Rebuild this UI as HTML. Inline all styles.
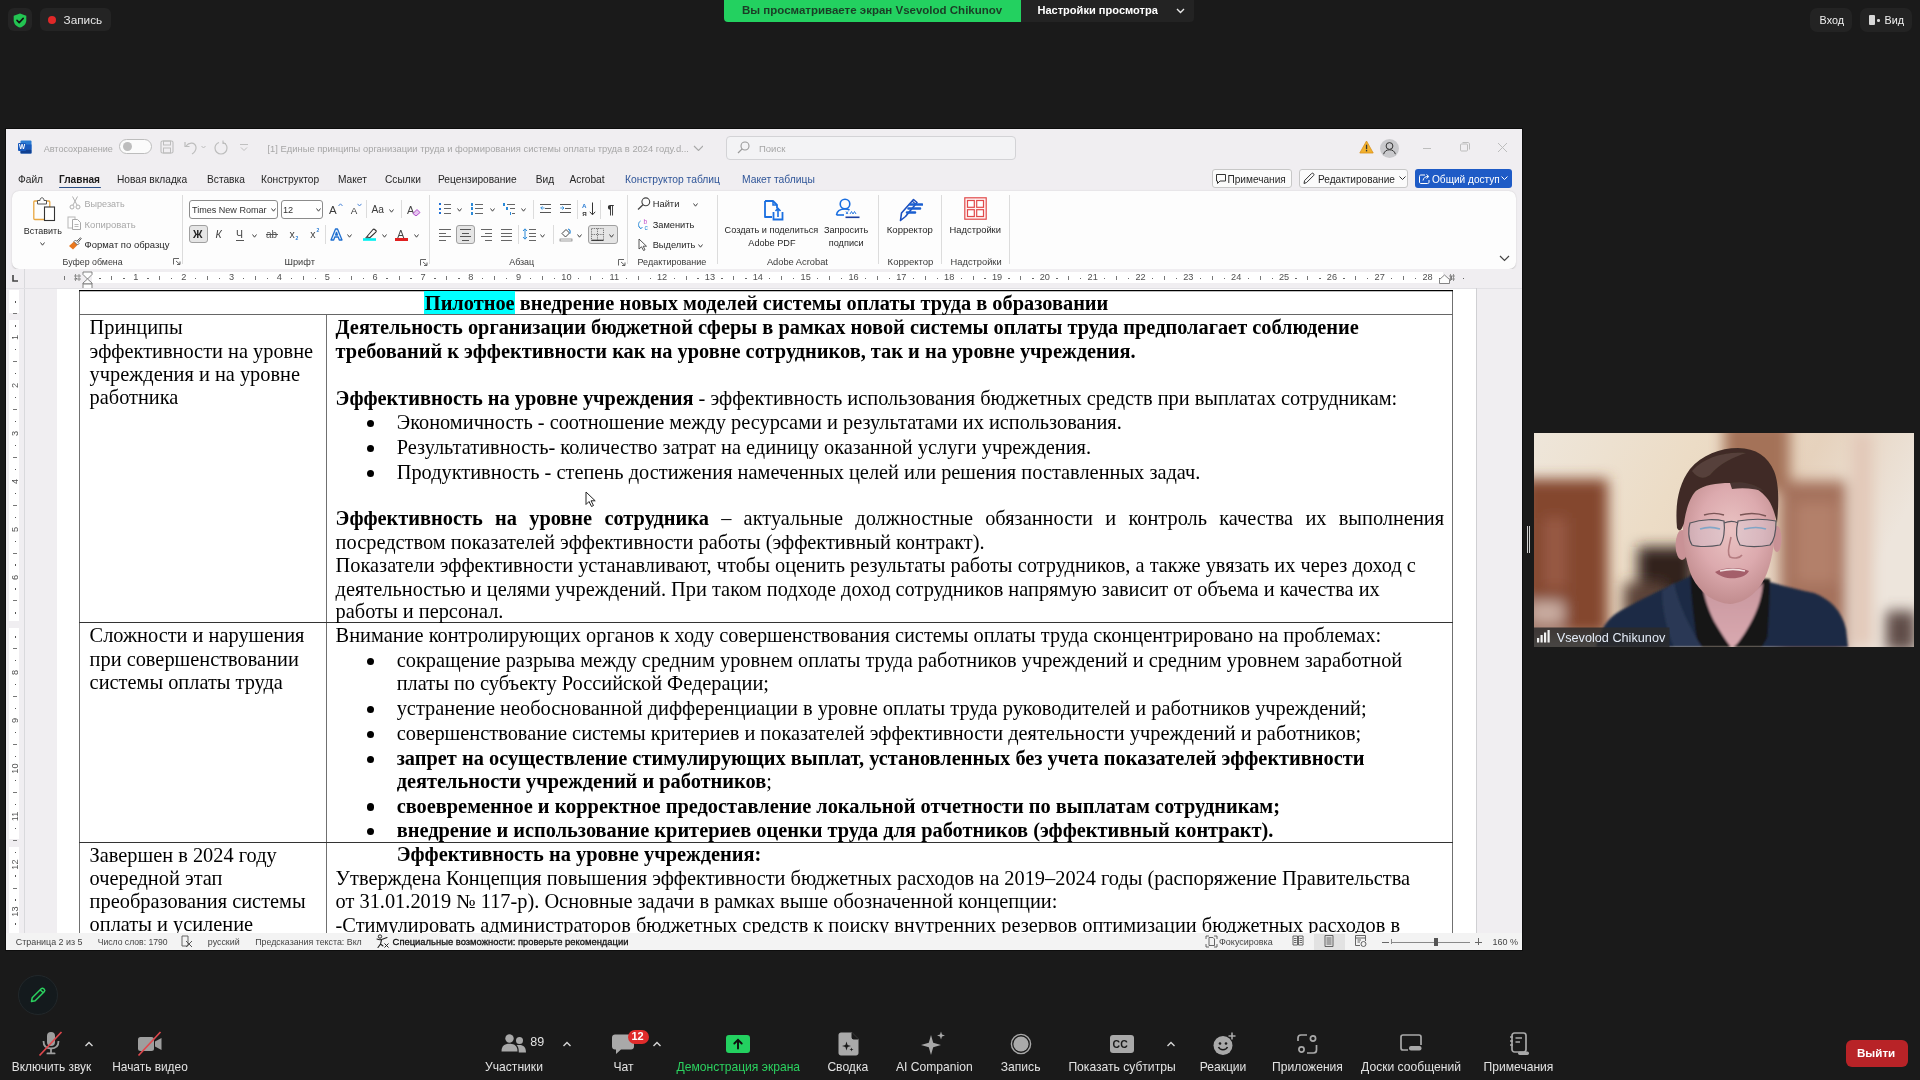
<!DOCTYPE html><html><head><meta charset="utf-8"><style>
*{margin:0;padding:0;box-sizing:border-box}
html,body{width:1920px;height:1080px;overflow:hidden;background:#1a1a1a}
body{position:relative;font-family:'Liberation Sans',sans-serif}
.t{position:absolute;white-space:nowrap}
.r{position:absolute;display:block}
</style></head><body><div id="root" style="position:absolute;left:0;top:0;width:1920px;height:1080px;overflow:hidden;will-change:transform"><div class="r" style="left:8px;top:8px;width:24px;height:23px;background:#242424;border-radius:6px"></div>
<svg class="r" style="left:13px;top:13px;" width="14" height="15" viewBox="0 0 14 15"><path d="M7 0.5 L13.3 2.8 V7.2 C13.3 10.9 10.6 13.4 7 14.6 C3.4 13.4 0.7 10.9 0.7 7.2 V2.8 Z" fill="#23c552"/><path d="M4 7.4 L6.2 9.6 L10.2 5.4" stroke="#111" stroke-width="1.6" fill="none" stroke-linecap="round" stroke-linejoin="round"/></svg>
<div class="r" style="left:40px;top:8px;width:71px;height:23px;background:#242424;border-radius:6px"></div>
<div class="r" style="left:48px;top:16px;width:8px;height:8px;background:#e02828;border-radius:50%"></div>
<div class="t" style="left:63.5px;top:15px;font-size:11.8px;line-height:11.8px;color:#e6e6e6;font-weight:400;font-family:'Liberation Sans';">Запись</div>
<div class="r" style="left:724px;top:0px;width:297px;height:22px;background:#23d160;border-radius:0 0 0 4px"></div>
<div class="t" style="left:742px;top:5px;font-size:11.5px;line-height:11.5px;color:#1b3d26;font-weight:700;font-family:'Liberation Sans';">Вы просматриваете экран Vsevolod Chikunov</div>
<div class="r" style="left:1021px;top:0px;width:173px;height:22px;background:#232323;border-radius:0 0 4px 0"></div>
<div class="t" style="left:1037.4px;top:5px;font-size:11.07px;line-height:11.07px;color:#ffffff;font-weight:700;font-family:'Liberation Sans';">Настройки просмотра</div>
<svg class="r" style="left:1176px;top:8px;" width="9" height="6" viewBox="0 0 9 6"><path d="M1 1 L4.5 4.5 L8 1" stroke="#e8e8e8" stroke-width="1.4" fill="none"/></svg>
<div class="r" style="left:1810px;top:8px;width:42px;height:24px;background:#232323;border-radius:7px"></div>
<div class="t" style="left:1819.6px;top:15px;font-size:10.8px;line-height:10.8px;color:#f0f0f0;font-weight:400;font-family:'Liberation Sans';">Вход</div>
<div class="r" style="left:1860px;top:8px;width:52px;height:24px;background:#232323;border-radius:7px"></div>
<div class="r" style="left:1869px;top:15px;width:6px;height:10px;background:#d8d8d8;border-radius:1px"></div>
<div class="r" style="left:1877px;top:19px;width:2.5px;height:2.5px;background:#d8d8d8;border-radius:50%"></div>
<div class="t" style="left:1884.6px;top:15px;font-size:10.8px;line-height:10.8px;color:#f0f0f0;font-weight:400;font-family:'Liberation Sans';">Вид</div>
<div class="r" style="left:18px;top:975px;width:40px;height:40px;background:#141a1d;border-radius:50%;border:1px solid #22282b"></div>
<svg class="r" style="left:29px;top:986px;" width="18" height="18" viewBox="0 0 18 18"><path d="M2.5 15.5 L3.2 11.8 L12.2 2.8 C12.9 2.1 14.0 2.1 14.7 2.8 L15.2 3.3 C15.9 4.0 15.9 5.1 15.2 5.8 L6.2 14.8 Z M11.2 3.8 L14.2 6.8" stroke="#2bd15f" stroke-width="1.5" fill="none" stroke-linejoin="round"/></svg>
<svg class="r" style="left:38px;top:1031px;" width="26" height="26" viewBox="0 0 26 26"><rect x="9" y="1" width="8" height="14" rx="4" fill="#9e9e9e"/><path d="M5.5 10 C5.5 15 8.5 17.5 13 17.5 C17.5 17.5 20.5 15 20.5 10" stroke="#9e9e9e" stroke-width="1.8" fill="none"/><rect x="12.1" y="17.5" width="1.8" height="4.5" fill="#9e9e9e"/><rect x="8.5" y="21.5" width="9" height="1.8" rx="0.9" fill="#9e9e9e"/><path d="M1.5 24.5 L23.5 1" stroke="#e0484d" stroke-width="1.7"/></svg>
<div class="t" style="left:-148.5px;width:400px;text-align:center;top:1059.5px;font-size:11.9px;line-height:14px;color:#e3e3e3">Включить звук</div>
<svg class="r" style="left:84px;top:1041px;" width="10" height="6" viewBox="0 0 10 6"><path d="M1.5 5 L5 1.5 L8.5 5" stroke="#d6d6d6" stroke-width="1.4" fill="none"/></svg>
<svg class="r" style="left:137px;top:1031px;" width="26" height="26" viewBox="0 0 26 26"><rect x="1" y="6" width="16" height="14" rx="2.5" fill="#9e9e9e"/><path d="M18 10.5 L24.5 7 V19 L18 15.5 Z" fill="#9e9e9e"/><path d="M1.5 24.5 L23.5 1" stroke="#e0484d" stroke-width="1.7"/></svg>
<div class="t" style="left:-50px;width:400px;text-align:center;top:1059.5px;font-size:11.9px;line-height:14px;color:#e3e3e3">Начать видео</div>
<svg class="r" style="left:501px;top:1034px;" width="26" height="19" viewBox="0 0 26 19"><circle cx="8.5" cy="4.5" r="4.2" fill="#a9a9a9"/><path d="M0.5 17.5 C0.5 12 3.5 9.8 8.5 9.8 C13.5 9.8 16.5 12 16.5 17.5 Z" fill="#a9a9a9"/><circle cx="18.5" cy="6.5" r="3.5" fill="#a9a9a9"/><path d="M17.8 18.5 C17.8 14 17 12.5 15.5 11.3 C16.5 11 17.5 10.9 18.5 10.9 C22.5 10.9 25 12.8 25 18.5 Z" fill="#a9a9a9"/></svg>
<div class="t" style="left:530.3px;top:1036px;font-size:12.5px;line-height:12.5px;color:#e3e3e3;font-weight:400;font-family:'Liberation Sans';">89</div>
<svg class="r" style="left:562px;top:1041px;" width="10" height="6" viewBox="0 0 10 6"><path d="M1.5 5 L5 1.5 L8.5 5" stroke="#d6d6d6" stroke-width="1.4" fill="none"/></svg>
<div class="t" style="left:314px;width:400px;text-align:center;top:1059.5px;font-size:12.1px;line-height:14px;color:#e3e3e3">Участники</div>
<svg class="r" style="left:612px;top:1034px;" width="24" height="21" viewBox="0 0 24 21"><path d="M3 0.5 H19 C20.7 0.5 22 1.8 22 3.5 V12.5 C22 14.2 20.7 15.5 19 15.5 H9 L4 20 V15.5 H3 C1.3 15.5 0 14.2 0 12.5 V3.5 C0 1.8 1.3 0.5 3 0.5 Z" fill="#a9a9a9"/></svg>
<div class="r" style="left:627.5px;top:1029.5px;width:21px;height:14px;background:#e02b2b;border-radius:7px"></div>
<div class="t" style="left:631.5px;top:1031px;font-size:11px;line-height:11px;color:#ffffff;font-weight:700;font-family:'Liberation Sans';">12</div>
<svg class="r" style="left:652px;top:1041px;" width="10" height="6" viewBox="0 0 10 6"><path d="M1.5 5 L5 1.5 L8.5 5" stroke="#d6d6d6" stroke-width="1.4" fill="none"/></svg>
<div class="t" style="left:423.5px;width:400px;text-align:center;top:1059.5px;font-size:12.1px;line-height:14px;color:#e3e3e3">Чат</div>
<div class="r" style="left:725.7px;top:1034.7px;width:24.5px;height:18.5px;background:#23d160;border-radius:3px"></div>
<svg class="r" style="left:732px;top:1038px;" width="12" height="12" viewBox="0 0 12 12"><path d="M6 10.5 V2 M2.3 5.5 L6 1.8 L9.7 5.5" stroke="#0f0f0f" stroke-width="1.9" fill="none" stroke-linecap="round"/></svg>
<div class="t" style="left:538.3px;width:400px;text-align:center;top:1059.5px;font-size:12.1px;line-height:14px;color:#2bd15f">Демонстрация экрана</div>
<svg class="r" style="left:838px;top:1032px;" width="21" height="24" viewBox="0 0 21 24"><path d="M3 0.5 H14 L20.5 7 V21 C20.5 22.4 19.4 23.5 18 23.5 H3 C1.6 23.5 0.5 22.4 0.5 21 V3 C0.5 1.6 1.6 0.5 3 0.5 Z" fill="#a9a9a9"/><path d="M14 0.5 V7 H20.5" fill="#1a1a1a"/><path d="M14 0.8 V5.5 C14 6.3 14.7 7 15.5 7 H20.2" stroke="#1a1a1a" stroke-width="1" fill="none"/><path d="M8.5 9.5 L9.6 13 L13 14 L9.6 15.1 L8.5 18.5 L7.4 15.1 L4 14 L7.4 13 Z" fill="#1a1a1a"/><path d="M13.5 15.5 L14 17 L15.5 17.5 L14 18 L13.5 19.5 L13 18 L11.5 17.5 L13 17 Z" fill="#1a1a1a"/></svg>
<div class="t" style="left:647.8px;width:400px;text-align:center;top:1059.5px;font-size:12.1px;line-height:14px;color:#e3e3e3">Сводка</div>
<svg class="r" style="left:920px;top:1031px;" width="27" height="25" viewBox="0 0 27 25"><path d="M11 4 L13.2 11.8 L21 14 L13.2 16.2 L11 24 L8.8 16.2 L1 14 L8.8 11.8 Z" fill="#a9a9a9"/><path d="M21 0.5 L22 3.5 L25 4.5 L22 5.5 L21 8.5 L20 5.5 L17 4.5 L20 3.5 Z" fill="#a9a9a9"/></svg>
<div class="t" style="left:734.3px;width:400px;text-align:center;top:1059.5px;font-size:12.1px;line-height:14px;color:#e3e3e3">AI Companion</div>
<svg class="r" style="left:1010px;top:1033px;" width="22" height="22" viewBox="0 0 22 22"><circle cx="11" cy="11" r="9.6" stroke="#a9a9a9" stroke-width="1.4" fill="none"/><circle cx="11" cy="11" r="7.6" fill="#a9a9a9"/></svg>
<div class="t" style="left:820.6px;width:400px;text-align:center;top:1059.5px;font-size:12.1px;line-height:14px;color:#e3e3e3">Запись</div>
<div class="r" style="left:1110.3px;top:1034.8px;width:23.5px;height:18px;background:#a9a9a9;border-radius:3px"></div>
<div class="t" style="left:1112.6px;top:1039px;font-size:10.5px;line-height:10.5px;color:#1a1a1a;font-weight:700;font-family:'Liberation Sans';">CC</div>
<svg class="r" style="left:1166px;top:1041px;" width="10" height="6" viewBox="0 0 10 6"><path d="M1.5 5 L5 1.5 L8.5 5" stroke="#d6d6d6" stroke-width="1.4" fill="none"/></svg>
<div class="t" style="left:922px;width:400px;text-align:center;top:1059.5px;font-size:12.1px;line-height:14px;color:#e3e3e3">Показать субтитры</div>
<svg class="r" style="left:1213px;top:1032px;" width="24" height="24" viewBox="0 0 24 24"><circle cx="10" cy="13.5" r="9.5" fill="#a9a9a9"/><circle cx="7" cy="11.5" r="1.3" fill="#1a1a1a"/><circle cx="13" cy="11.5" r="1.3" fill="#1a1a1a"/><path d="M5.5 15 C7 18.5 13 18.5 14.5 15" stroke="#1a1a1a" stroke-width="1.5" fill="none"/><path d="M19 0.5 V7.5 M15.5 4 H22.5" stroke="#a9a9a9" stroke-width="1.6"/></svg>
<div class="t" style="left:1023px;width:400px;text-align:center;top:1059.5px;font-size:12.1px;line-height:14px;color:#e3e3e3">Реакции</div>
<svg class="r" style="left:1297px;top:1034px;" width="21" height="20" viewBox="0 0 21 20"><path d="M1 7 V4 C1 2.3 2.3 1 4 1 H10" stroke="#a9a9a9" stroke-width="1.7" fill="none"/><path d="M19.5 11 V16 C19.5 17.7 18.2 19 16.5 19 H10" stroke="#a9a9a9" stroke-width="1.7" fill="none"/><circle cx="16" cy="4.5" r="2.6" stroke="#a9a9a9" stroke-width="1.7" fill="none"/><circle cx="4.5" cy="15.5" r="2.6" stroke="#a9a9a9" stroke-width="1.7" fill="none"/></svg>
<div class="t" style="left:1107.5px;width:400px;text-align:center;top:1059.5px;font-size:12.1px;line-height:14px;color:#e3e3e3">Приложения</div>
<svg class="r" style="left:1400px;top:1034px;" width="22" height="18" viewBox="0 0 22 18"><path d="M8 16 H3 C1.8 16 1 15.2 1 14 V3 C1 1.8 1.8 1 3 1 H19 C20.2 1 21 1.8 21 3 V11" stroke="#a9a9a9" stroke-width="1.7" fill="none"/><rect x="9" y="12" width="12.5" height="4.5" rx="2" fill="#a9a9a9"/></svg>
<div class="t" style="left:1211px;width:400px;text-align:center;top:1059.5px;font-size:12.1px;line-height:14px;color:#e3e3e3">Доски сообщений</div>
<svg class="r" style="left:1509px;top:1032px;" width="21" height="24" viewBox="0 0 21 24"><rect x="3" y="1" width="14" height="19" rx="2.5" stroke="#a9a9a9" stroke-width="1.7" fill="none"/><path d="M1 5 H4 M1 9 H4 M1 13 H4 M6.5 6 H13 M6.5 10 H11" stroke="#a9a9a9" stroke-width="1.5"/><rect x="9" y="19.5" width="11" height="3.5" rx="1.7" fill="#a9a9a9"/></svg>
<div class="t" style="left:1318.5px;width:400px;text-align:center;top:1059.5px;font-size:12.1px;line-height:14px;color:#e3e3e3">Примечания</div>
<div class="r" style="left:1846px;top:1040px;width:62px;height:27px;background:#b82327;border-radius:6px"></div>
<div class="t" style="left:1857px;top:1047px;font-size:11.6px;line-height:11.6px;color:#ffffff;font-weight:700;font-family:'Liberation Sans';">Выйти</div>
<div class="r" style="left:5px;top:128px;width:1518px;height:823px;background:#0d0d0d"></div>
<div class="r" style="left:6px;top:129px;width:1516px;height:821px;background:#f0eef1"></div>
<svg class="r" style="left:18px;top:140px;" width="14" height="14" viewBox="0 0 14 14"><rect x="2.5" y="0.5" width="11" height="13" rx="1" fill="#2b7cd3"/><rect x="2.5" y="4.5" width="11" height="5" fill="#185abd"/><rect x="2.5" y="9.5" width="11" height="4" rx="0.5" fill="#103f91"/><rect x="0" y="3" width="8" height="8" rx="1" fill="#185abd"/><text x="4" y="9.4" font-size="6.5" font-family="Liberation Sans" font-weight="700" fill="#fff" text-anchor="middle">W</text></svg>
<div class="t" style="left:43.7px;top:145px;font-size:9.08px;line-height:9.08px;color:#a6a6a6;font-weight:400;font-family:'Liberation Sans';">Автосохранение</div>
<div class="r" style="left:119px;top:139px;width:33px;height:15px;background:#fbfbfb;border:1px solid #bdbdbd;border-radius:8px"></div>
<div class="r" style="left:122.5px;top:142px;width:9px;height:9px;background:#bdbdbd;border-radius:50%"></div>
<svg class="r" style="left:160px;top:140px;" width="15" height="15" viewBox="0 0 15 15"><rect x="1" y="1" width="12" height="12" rx="1.5" stroke="#bdbdbd" stroke-width="1.1" fill="none"/><rect x="3.5" y="1" width="7" height="4" stroke="#bdbdbd" stroke-width="1" fill="none"/><rect x="3.5" y="8" width="7" height="5" stroke="#bdbdbd" stroke-width="1" fill="none"/></svg>
<svg class="r" style="left:183px;top:140px;" width="26" height="15" viewBox="0 0 26 15"><path d="M3 6 C6 2 12 2 13 7 C13.5 10 11 13 9 14" stroke="#bdbdbd" stroke-width="1.2" fill="none"/><path d="M2 2 V6.5 H6.5" stroke="#bdbdbd" stroke-width="1.2" fill="none"/><path d="M18.5 6 L20.5 8 L22.5 6" stroke="#bdbdbd" stroke-width="1" fill="none"/></svg>
<svg class="r" style="left:213px;top:140px;" width="16" height="15" viewBox="0 0 16 15"><path d="M10 2.5 C12.5 3.5 14 5.5 14 8 C14 11.3 11.3 14 8 14 C4.7 14 2 11.3 2 8 C2 5.5 3.5 3.5 6 2.5" stroke="#bdbdbd" stroke-width="1.2" fill="none"/><path d="M10 0.5 V3.5 H13" stroke="#bdbdbd" stroke-width="1.1" fill="none"/></svg>
<svg class="r" style="left:239px;top:143px;" width="10" height="9" viewBox="0 0 10 9"><path d="M1 1.5 H9 M2 4.5 L5 7.5 L8 4.5" stroke="#c0c0c0" stroke-width="1" fill="none"/></svg>
<div class="t" style="left:267.5px;top:145px;font-size:9.38px;line-height:9.38px;color:#a6a6a6;font-weight:400;font-family:'Liberation Sans';">[1] Единые принципы организации труда и формирования системы оплаты труда в 2024 году.d...</div>
<svg class="r" style="left:692.5px;top:145px;" width="10" height="6" viewBox="0 0 10 6"><path d="M1 1 L5.5 5.5 L10 1" stroke="#a8a8a8" stroke-width="1.1" fill="none"/></svg>
<div class="r" style="left:726px;top:135.5px;width:290px;height:24.5px;background:#f3f3f5;border:1px solid #d3d3d6;border-radius:4px"></div>
<svg class="r" style="left:737px;top:141px;" width="13" height="13" viewBox="0 0 13 13"><circle cx="8" cy="5" r="4" stroke="#9a9a9a" stroke-width="1.1" fill="none"/><path d="M5.2 7.8 L1 12" stroke="#9a9a9a" stroke-width="1.2"/></svg>
<div class="t" style="left:759px;top:144px;font-size:9.5px;line-height:9.5px;color:#a6a6a6;font-weight:400;font-family:'Liberation Sans';">Поиск</div>
<svg class="r" style="left:1359px;top:140px;" width="15" height="14" viewBox="0 0 15 14"><path d="M7.5 1 L14.2 13 H0.8 Z" fill="#f2b12e" stroke="#d8901a" stroke-width="0.8"/><rect x="6.9" y="4.7" width="1.3" height="4.5" fill="#333"/><rect x="6.9" y="10" width="1.3" height="1.4" fill="#333"/></svg>
<div class="r" style="left:1380px;top:138.5px;width:19px;height:19px;background:#c9c9cc;border-radius:50%"></div>
<svg class="r" style="left:1380px;top:138.5px;" width="19" height="19" viewBox="0 0 19 19"><circle cx="9.5" cy="7" r="3.4" stroke="#333" stroke-width="1" fill="none"/><path d="M3.6 15.2 C4.5 12 6.6 10.8 9.5 10.8 C12.4 10.8 14.5 12 15.4 15.2" stroke="#333" stroke-width="1" fill="none"/></svg>
<div class="r" style="left:1423px;top:147.5px;width:8px;height:1px;background:#bdbdbd"></div>
<svg class="r" style="left:1460px;top:142px;" width="10" height="10" viewBox="0 0 10 10"><rect x="0.5" y="2" width="7" height="7" rx="1" stroke="#bdbdbd" stroke-width="1" fill="none"/><path d="M2.5 0.5 H8 C8.8 0.5 9.5 1.2 9.5 2 V7.5" stroke="#bdbdbd" stroke-width="1" fill="none"/></svg>
<svg class="r" style="left:1497px;top:142px;" width="11" height="11" viewBox="0 0 11 11"><path d="M1 1 L10 10 M10 1 L1 10" stroke="#bdbdbd" stroke-width="1"/></svg>
<div class="t" style="left:18px;top:175px;font-size:10.2px;line-height:10.2px;color:#262626;font-weight:400;font-family:'Liberation Sans';">Файл</div>
<div class="t" style="left:117px;top:175px;font-size:10.2px;line-height:10.2px;color:#262626;font-weight:400;font-family:'Liberation Sans';">Новая вкладка</div>
<div class="t" style="left:207px;top:175px;font-size:10.2px;line-height:10.2px;color:#262626;font-weight:400;font-family:'Liberation Sans';">Вставка</div>
<div class="t" style="left:261px;top:175px;font-size:10.2px;line-height:10.2px;color:#262626;font-weight:400;font-family:'Liberation Sans';">Конструктор</div>
<div class="t" style="left:338px;top:175px;font-size:10.2px;line-height:10.2px;color:#262626;font-weight:400;font-family:'Liberation Sans';">Макет</div>
<div class="t" style="left:385px;top:175px;font-size:10.2px;line-height:10.2px;color:#262626;font-weight:400;font-family:'Liberation Sans';">Ссылки</div>
<div class="t" style="left:438px;top:175px;font-size:10.2px;line-height:10.2px;color:#262626;font-weight:400;font-family:'Liberation Sans';">Рецензирование</div>
<div class="t" style="left:535.7px;top:175px;font-size:10.2px;line-height:10.2px;color:#262626;font-weight:400;font-family:'Liberation Sans';">Вид</div>
<div class="t" style="left:569.5px;top:175px;font-size:10.2px;line-height:10.2px;color:#262626;font-weight:400;font-family:'Liberation Sans';">Acrobat</div>
<div class="t" style="left:59px;top:175px;font-size:10.08px;line-height:10.08px;color:#1a1a1a;font-weight:700;font-family:'Liberation Sans';">Главная</div>
<div class="r" style="left:59px;top:186.7px;width:41.5px;height:1.6px;background:#2b5088;border-radius:1px"></div>
<div class="t" style="left:625px;top:175px;font-size:10.3px;line-height:10.3px;color:#2f5598;font-weight:400;font-family:'Liberation Sans';">Конструктор таблиц</div>
<div class="t" style="left:742px;top:175px;font-size:10.3px;line-height:10.3px;color:#2f5598;font-weight:400;font-family:'Liberation Sans';">Макет таблицы</div>
<div class="r" style="left:1211.5px;top:169px;width:80px;height:19px;background:#fbfbfb;border:1px solid #c7c7c7;border-radius:3px"></div>
<svg class="r" style="left:1215px;top:173px;" width="12" height="12" viewBox="0 0 12 12"><path d="M1.5 1.5 H10.5 V8 H5 L2.5 10.5 V8 H1.5 Z" stroke="#333" stroke-width="1" fill="none"/></svg>
<div class="t" style="left:1227.5px;top:175px;font-size:10.1px;line-height:10.1px;color:#262626;font-weight:400;font-family:'Liberation Sans';">Примечания</div>
<div class="r" style="left:1298.5px;top:169px;width:109px;height:19px;background:#fbfbfb;border:1px solid #c7c7c7;border-radius:3px"></div>
<svg class="r" style="left:1302px;top:171px;" width="13" height="14" viewBox="0 0 13 14"><path d="M2 12.5 L2.6 9.5 L9.5 2.6 C10.1 2 10.9 2 11.5 2.6 C12.1 3.2 12.1 4 11.5 4.6 L4.6 11.5 Z" stroke="#333" stroke-width="1" fill="none"/></svg>
<div class="t" style="left:1318px;top:175px;font-size:10.1px;line-height:10.1px;color:#262626;font-weight:400;font-family:'Liberation Sans';">Редактирование</div>
<svg class="r" style="left:1399px;top:176px;" width="7" height="5" viewBox="0 0 7 5"><path d="M0.5 0.5 L3.5 3.5 L6.5 0.5" stroke="#333" stroke-width="1" fill="none"/></svg>
<div class="r" style="left:1414.5px;top:169px;width:97.5px;height:19px;background:#1e5bc6;border-radius:3px"></div>
<svg class="r" style="left:1418px;top:172px;" width="13" height="13" viewBox="0 0 13 13"><path d="M7 3 H3 C2 3 1.5 3.5 1.5 4.5 V10 C1.5 11 2 11.5 3 11.5 H9.5 C10.5 11.5 11 11 11 10 V8" stroke="#fff" stroke-width="1" fill="none"/><path d="M5 8.5 C5.5 6 7 4.5 10 4.5 M8.5 2.5 L10.8 4.5 L8.5 6.5" stroke="#fff" stroke-width="1" fill="none"/></svg>
<div class="t" style="left:1432px;top:175px;font-size:10.1px;line-height:10.1px;color:#ffffff;font-weight:400;font-family:'Liberation Sans';">Общий доступ</div>
<svg class="r" style="left:1501px;top:176px;" width="7" height="5" viewBox="0 0 7 5"><path d="M0.5 0.5 L3.5 3.5 L6.5 0.5" stroke="#fff" stroke-width="1" fill="none"/></svg>
<div class="r" style="left:12px;top:190.5px;width:1504px;height:78.5px;background:#fdfdfd;border-radius:7px;box-shadow:0 0.5px 1.5px rgba(0,0,0,0.18)"></div>
<svg class="r" style="left:32px;top:197px;" width="24" height="25" viewBox="0 0 24 25"><rect x="1.8" y="4" width="16" height="18.5" rx="1" stroke="#e8a640" stroke-width="1.3" fill="#fdfdfd"/><path d="M5.5 7 V3.5 H8 C8 1.5 9 0.8 10 0.8 C11 0.8 12 1.5 12 3.5 H14.5 V7 Z" stroke="#555" stroke-width="1" fill="#fdfdfd"/><rect x="12.5" y="10" width="10" height="13.5" stroke="#333" stroke-width="1.1" fill="#fff"/></svg>
<div class="t" style="left:23.7px;top:227px;font-size:9.0px;line-height:9.0px;color:#262626;font-weight:400;font-family:'Liberation Sans';">Вставить</div>
<svg class="r" style="left:39.5px;top:242px;" width="5" height="4" viewBox="0 0 5 4"><path d="M0.5 0.5 L2.5 3.2 L4.5 0.5" stroke="#444" stroke-width="1" fill="none"/></svg>
<svg class="r" style="left:69px;top:196px;" width="12" height="14" viewBox="0 0 12 14"><path d="M3.5 0.5 L8 9 M8.5 0.5 L4 9" stroke="#b0b0b0" stroke-width="1" fill="none"/><circle cx="3" cy="11" r="2" stroke="#b0b0b0" stroke-width="1" fill="none"/><circle cx="9" cy="11" r="2" stroke="#b0b0b0" stroke-width="1" fill="none"/></svg>
<div class="t" style="left:84.6px;top:200px;font-size:9.0px;line-height:9.0px;color:#a8a8a8;font-weight:400;font-family:'Liberation Sans';">Вырезать</div>
<svg class="r" style="left:67px;top:216px;" width="15" height="14" viewBox="0 0 15 14"><rect x="1" y="1" width="7" height="11" stroke="#b8b8b8" stroke-width="1" fill="none"/><path d="M5.5 3.5 H10.5 L13.5 6.5 V13.5 H5.5 Z" stroke="#a8a8a8" stroke-width="1" fill="#fdfdfd"/><path d="M7.5 8.5 H11.5 M7.5 10.5 H11.5" stroke="#a8a8a8" stroke-width="0.8"/></svg>
<div class="t" style="left:84.6px;top:220px;font-size:9.47px;line-height:9.47px;color:#a8a8a8;font-weight:400;font-family:'Liberation Sans';">Копировать</div>
<svg class="r" style="left:68px;top:237px;" width="14" height="13" viewBox="0 0 14 13"><path d="M1 9 L6 4.5 L9.5 8 L5 12.5 Z" fill="#e8771e"/><path d="M6 4.5 L9.5 8 L11 6.5 L7.5 3 Z" fill="#fff" stroke="#444" stroke-width="0.8"/><path d="M9 4 L12.5 0.8 L13.2 1.5 L10.2 5.2" stroke="#444" stroke-width="0.9" fill="#fff"/></svg>
<div class="t" style="left:84.6px;top:240px;font-size:9.48px;line-height:9.48px;color:#262626;font-weight:400;font-family:'Liberation Sans';">Формат по образцу</div>
<div class="t" style="left:62.6px;top:258px;font-size:8.83px;line-height:8.83px;color:#3a3a3a;font-weight:400;font-family:'Liberation Sans';">Буфер обмена</div>
<svg class="r" style="left:172.5px;top:258px;" width="8" height="7" viewBox="0 0 8 7"><path d="M0.5 6.5 V0.5 H6" stroke="#555" stroke-width="0.9" fill="none"/><path d="M3 3 L7 6.5 M7 3.5 V6.5 H4" stroke="#555" stroke-width="0.9" fill="none"/></svg>
<div class="r" style="left:182px;top:195px;width:1px;height:69px;background:#dcdcdc"></div>
<div class="r" style="left:189px;top:200px;width:89px;height:18.5px;background:#fff;border:1px solid #8c8c8c;border-radius:3px"></div>
<div class="t" style="left:192px;top:206px;font-size:9.06px;line-height:9.06px;color:#333;font-weight:400;font-family:'Liberation Sans';">Times New Romar</div>
<svg class="r" style="left:271px;top:208px;" width="5" height="4" viewBox="0 0 5 4"><path d="M0.5 0.5 L2.5 3.2 L4.5 0.5" stroke="#444" stroke-width="1" fill="none"/></svg>
<div class="r" style="left:280.5px;top:200px;width:42.5px;height:18.5px;background:#fff;border:1px solid #8c8c8c;border-radius:3px"></div>
<div class="t" style="left:283px;top:206px;font-size:9.2px;line-height:9.2px;color:#333;font-weight:400;font-family:'Liberation Sans';">12</div>
<svg class="r" style="left:316px;top:208px;" width="5" height="4" viewBox="0 0 5 4"><path d="M0.5 0.5 L2.5 3.2 L4.5 0.5" stroke="#444" stroke-width="1" fill="none"/></svg>
<div class="t" style="left:329px;top:205px;font-size:11.5px;line-height:11.5px;color:#3a3a3a;font-weight:400;font-family:'Liberation Sans';">A</div>
<svg class="r" style="left:337.5px;top:203px;" width="5" height="4" viewBox="0 0 5 4"><path d="M0.5 3 L2.5 0.8 L4.5 3" stroke="#3a7bd5" stroke-width="0.9" fill="none"/></svg>
<div class="t" style="left:350.7px;top:206px;font-size:9.8px;line-height:9.8px;color:#3a3a3a;font-weight:400;font-family:'Liberation Sans';">A</div>
<svg class="r" style="left:357px;top:203px;" width="5" height="4" viewBox="0 0 5 4"><path d="M0.5 0.8 L2.5 3 L4.5 0.8" stroke="#3a7bd5" stroke-width="0.9" fill="none"/></svg>
<div class="r" style="left:366px;top:200px;width:1px;height:18px;background:#dcdcdc"></div>
<div class="t" style="left:371.5px;top:205px;font-size:10.2px;line-height:10.2px;color:#3a3a3a;font-weight:400;font-family:'Liberation Sans';">Aa</div>
<svg class="r" style="left:389px;top:209px;" width="5" height="4" viewBox="0 0 5 4"><path d="M0.5 0.5 L2.5 3.2 L4.5 0.5" stroke="#444" stroke-width="1" fill="none"/></svg>
<div class="r" style="left:401px;top:200px;width:1px;height:18px;background:#dcdcdc"></div>
<div class="t" style="left:407px;top:205px;font-size:10.8px;line-height:10.8px;color:#444;font-weight:400;font-family:'Liberation Sans';">A</div>
<svg class="r" style="left:412px;top:208px;" width="9" height="8" viewBox="0 0 9 8"><path d="M1 5.5 L5 1.5 L8 4.5 L4 8 Z" stroke="#b04ecb" stroke-width="1" fill="#e7c7f0"/></svg>
<div class="r" style="left:189.2px;top:225.2px;width:18.5px;height:18.3px;background:#e5e5e5;border:1px solid #a0a0a0;border-radius:3px"></div>
<div class="t" style="left:193px;top:229px;font-size:10.5px;line-height:10.5px;color:#222;font-weight:700;font-family:'Liberation Sans';">Ж</div>
<div class="t" style="left:215.5px;top:229px;font-size:10.5px;line-height:10.5px;color:#444;font-weight:400;font-family:'Liberation Sans';font-style:italic">К</div>
<div class="t" style="left:236px;top:229px;font-size:10.5px;line-height:10.5px;color:#444;font-weight:400;font-family:'Liberation Sans';">Ч</div>
<div class="r" style="left:236px;top:239.5px;width:7.5px;height:1px;background:#555"></div>
<svg class="r" style="left:251.7px;top:234px;" width="5" height="4" viewBox="0 0 5 4"><path d="M0.5 0.5 L2.5 3.2 L4.5 0.5" stroke="#444" stroke-width="1" fill="none"/></svg>
<div class="t" style="left:266px;top:230px;font-size:10px;line-height:10px;color:#555;font-weight:400;font-family:'Liberation Sans';">ab</div>
<div class="r" style="left:265.5px;top:234px;width:12px;height:0.9px;background:#555"></div>
<div class="t" style="left:289.5px;top:229px;font-size:10.5px;line-height:10.5px;color:#444;font-weight:400;font-family:'Liberation Sans';">x</div>
<div class="t" style="left:295.5px;top:236px;font-size:5px;line-height:5px;color:#2b7cd3;font-weight:700;font-family:'Liberation Sans';">2</div>
<div class="t" style="left:310.3px;top:229px;font-size:10.5px;line-height:10.5px;color:#444;font-weight:400;font-family:'Liberation Sans';">x</div>
<div class="t" style="left:316.5px;top:228px;font-size:5px;line-height:5px;color:#2b7cd3;font-weight:700;font-family:'Liberation Sans';">2</div>
<div class="r" style="left:324.5px;top:225px;width:1px;height:19px;background:#dcdcdc"></div>
<svg class="r" style="left:329.5px;top:227.5px;" width="13" height="13" viewBox="0 0 13 13"><path d="M1 12 L5.5 1 H7.5 L12 12 H9.3 L8.2 9 H4.8 L3.7 12 Z M5.6 7 H7.4 L6.5 4.3 Z" fill="#eaf3fc" stroke="#1f6fd0" stroke-width="1.3" stroke-linejoin="round"/></svg>
<svg class="r" style="left:347px;top:234px;" width="5" height="4" viewBox="0 0 5 4"><path d="M0.5 0.5 L2.5 3.2 L4.5 0.5" stroke="#444" stroke-width="1" fill="none"/></svg>
<svg class="r" style="left:363px;top:227px;" width="14" height="14" viewBox="0 0 14 14"><path d="M4 9.5 L10 2.5 C10.5 2 11.2 2 11.7 2.5 L12.8 3.5 C13.3 4 13.3 4.7 12.8 5.2 L6.5 11 Z" stroke="#333" stroke-width="1.1" fill="none" stroke-linejoin="round"/><path d="M4 9.5 L2.5 11.2 L5 11.2 L6.5 11" stroke="#444" stroke-width="1" fill="#666"/><rect x="0" y="11.2" width="13" height="2.6" fill="#00f0f0"/></svg>
<svg class="r" style="left:381.5px;top:234px;" width="5" height="4" viewBox="0 0 5 4"><path d="M0.5 0.5 L2.5 3.2 L4.5 0.5" stroke="#444" stroke-width="1" fill="none"/></svg>
<div class="t" style="left:397.3px;top:229px;font-size:10.5px;line-height:10.5px;color:#444;font-weight:400;font-family:'Liberation Sans';">A</div>
<div class="r" style="left:395px;top:238px;width:13px;height:2.6px;background:#e02020"></div>
<svg class="r" style="left:414px;top:234px;" width="5" height="4" viewBox="0 0 5 4"><path d="M0.5 0.5 L2.5 3.2 L4.5 0.5" stroke="#444" stroke-width="1" fill="none"/></svg>
<div class="t" style="left:284.5px;top:258px;font-size:9.24px;line-height:9.24px;color:#3a3a3a;font-weight:400;font-family:'Liberation Sans';">Шрифт</div>
<svg class="r" style="left:419.5px;top:258.5px;" width="8" height="7" viewBox="0 0 8 7"><path d="M0.5 6.5 V0.5 H6" stroke="#555" stroke-width="0.9" fill="none"/><path d="M3 3 L7 6.5 M7 3.5 V6.5 H4" stroke="#555" stroke-width="0.9" fill="none"/></svg>
<div class="r" style="left:428.5px;top:195px;width:1px;height:69px;background:#dcdcdc"></div>
<div class="r" style="left:439px;top:203.0px;width:2px;height:2px;background:#1f6fd6"></div>
<div class="r" style="left:443.5px;top:203.5px;width:7.5px;height:1.1px;background:#666"></div>
<div class="r" style="left:439px;top:207.6px;width:2px;height:2px;background:#1f6fd6"></div>
<div class="r" style="left:443.5px;top:208.1px;width:7.5px;height:1.1px;background:#666"></div>
<div class="r" style="left:439px;top:212.2px;width:2px;height:2px;background:#1f6fd6"></div>
<div class="r" style="left:443.5px;top:212.7px;width:7.5px;height:1.1px;background:#666"></div>
<svg class="r" style="left:457px;top:208px;" width="5" height="4" viewBox="0 0 5 4"><path d="M0.5 0.5 L2.5 3.2 L4.5 0.5" stroke="#444" stroke-width="1" fill="none"/></svg>
<div class="r" style="left:470.5px;top:202.5px;width:2.2px;height:3px;background:#2b8ad8"></div>
<div class="r" style="left:475px;top:203.5px;width:8px;height:1.1px;background:#666"></div>
<div class="r" style="left:470.5px;top:207.1px;width:2.2px;height:3px;background:#2b8ad8"></div>
<div class="r" style="left:475px;top:208.1px;width:8px;height:1.1px;background:#666"></div>
<div class="r" style="left:470.5px;top:211.7px;width:2.2px;height:3px;background:#2b8ad8"></div>
<div class="r" style="left:475px;top:212.7px;width:8px;height:1.1px;background:#666"></div>
<svg class="r" style="left:490px;top:208px;" width="5" height="4" viewBox="0 0 5 4"><path d="M0.5 0.5 L2.5 3.2 L4.5 0.5" stroke="#444" stroke-width="1" fill="none"/></svg>
<div class="r" style="left:503px;top:202.5px;width:1.5px;height:3px;background:#2b8ad8"></div>
<div class="r" style="left:506.5px;top:203.5px;width:8.5px;height:1.1px;background:#666"></div>
<div class="r" style="left:506px;top:207px;width:2px;height:3px;background:#2b8ad8"></div>
<div class="r" style="left:510px;top:208px;width:5px;height:1.1px;background:#666"></div>
<div class="r" style="left:509.5px;top:211.5px;width:1.2px;height:3px;background:#2b8ad8"></div>
<div class="r" style="left:512px;top:212.5px;width:3px;height:1.1px;background:#666"></div>
<svg class="r" style="left:520.5px;top:208px;" width="5" height="4" viewBox="0 0 5 4"><path d="M0.5 0.5 L2.5 3.2 L4.5 0.5" stroke="#444" stroke-width="1" fill="none"/></svg>
<div class="r" style="left:533px;top:200px;width:1px;height:19px;background:#dcdcdc"></div>
<div class="r" style="left:540px;top:203.5px;width:11px;height:1.1px;background:#555"></div>
<div class="r" style="left:545px;top:207.8px;width:6px;height:1.1px;background:#555"></div>
<div class="r" style="left:540px;top:212.1px;width:11px;height:1.1px;background:#555"></div>
<svg class="r" style="left:540px;top:206px;" width="5" height="4" viewBox="0 0 5 4"><path d="M4.5 2 H0.8 M2.5 0.3 L0.8 2 L2.5 3.7" stroke="#2b8ad8" stroke-width="0.9" fill="none"/></svg>
<div class="r" style="left:559.7px;top:203.5px;width:11px;height:1.1px;background:#555"></div>
<div class="r" style="left:565px;top:207.8px;width:6px;height:1.1px;background:#555"></div>
<div class="r" style="left:559.7px;top:212.1px;width:11px;height:1.1px;background:#555"></div>
<svg class="r" style="left:559.5px;top:206px;" width="5" height="4" viewBox="0 0 5 4"><path d="M0.3 2 H4 M2.3 0.3 L4 2 L2.3 3.7" stroke="#2b8ad8" stroke-width="0.9" fill="none"/></svg>
<div class="r" style="left:577px;top:200px;width:1px;height:19px;background:#dcdcdc"></div>
<div class="t" style="left:582px;top:203px;font-size:6.2px;line-height:6.2px;color:#2b7cd3;font-weight:700;font-family:'Liberation Sans';">A</div>
<div class="t" style="left:582.3px;top:211px;font-size:6.2px;line-height:6.2px;color:#333;font-weight:700;font-family:'Liberation Sans';">Я</div>
<svg class="r" style="left:588.5px;top:202px;" width="7" height="14" viewBox="0 0 7 14"><path d="M3.5 0.5 V12.5 M0.8 9.8 L3.5 12.8 L6.2 9.8" stroke="#333" stroke-width="1" fill="none"/></svg>
<div class="r" style="left:600px;top:200px;width:1px;height:19px;background:#dcdcdc"></div>
<div class="t" style="left:607.5px;top:204px;font-size:12px;line-height:12px;color:#333;font-weight:700;font-family:'Liberation Sans';">¶</div>
<div class="r" style="left:439.2px;top:229.0px;width:11.5px;height:1.1px;background:#666"></div>
<div class="r" style="left:439.2px;top:232.5px;width:7px;height:1.1px;background:#666"></div>
<div class="r" style="left:439.2px;top:236.0px;width:11.5px;height:1.1px;background:#666"></div>
<div class="r" style="left:439.2px;top:239.5px;width:7px;height:1.1px;background:#666"></div>
<div class="r" style="left:456px;top:225px;width:19px;height:18.5px;background:#e5e5e5;border:1px solid #a0a0a0;border-radius:3px"></div>
<div class="r" style="left:460.0px;top:229.0px;width:11px;height:1.1px;background:#555"></div>
<div class="r" style="left:462.0px;top:232.5px;width:7px;height:1.1px;background:#555"></div>
<div class="r" style="left:460.0px;top:236.0px;width:11px;height:1.1px;background:#555"></div>
<div class="r" style="left:462.0px;top:239.5px;width:7px;height:1.1px;background:#555"></div>
<div class="r" style="left:480.5px;top:229.0px;width:11.5px;height:1.1px;background:#666"></div>
<div class="r" style="left:485.0px;top:232.5px;width:7px;height:1.1px;background:#666"></div>
<div class="r" style="left:480.5px;top:236.0px;width:11.5px;height:1.1px;background:#666"></div>
<div class="r" style="left:485.0px;top:239.5px;width:7px;height:1.1px;background:#666"></div>
<div class="r" style="left:500.8px;top:229.0px;width:11.2px;height:1.1px;background:#666"></div>
<div class="r" style="left:500.8px;top:232.5px;width:11.2px;height:1.1px;background:#666"></div>
<div class="r" style="left:500.8px;top:236.0px;width:11.2px;height:1.1px;background:#666"></div>
<div class="r" style="left:500.8px;top:239.5px;width:11.2px;height:1.1px;background:#666"></div>
<div class="r" style="left:518px;top:225px;width:1px;height:19px;background:#dcdcdc"></div>
<svg class="r" style="left:522px;top:228px;" width="6" height="12" viewBox="0 0 6 12"><path d="M3 1 V11 M1 3 L3 0.8 L5 3 M1 9 L3 11.2 L5 9" stroke="#2b8ad8" stroke-width="1" fill="none"/></svg>
<div class="r" style="left:529px;top:229.0px;width:7px;height:1.1px;background:#666"></div>
<div class="r" style="left:529px;top:232.5px;width:7px;height:1.1px;background:#666"></div>
<div class="r" style="left:529px;top:236.0px;width:7px;height:1.1px;background:#666"></div>
<div class="r" style="left:529px;top:239.5px;width:7px;height:1.1px;background:#666"></div>
<svg class="r" style="left:540.2px;top:234px;" width="5" height="4" viewBox="0 0 5 4"><path d="M0.5 0.5 L2.5 3.2 L4.5 0.5" stroke="#444" stroke-width="1" fill="none"/></svg>
<div class="r" style="left:553px;top:225px;width:1px;height:19px;background:#dcdcdc"></div>
<svg class="r" style="left:558.5px;top:227px;" width="14" height="15" viewBox="0 0 14 15"><path d="M3 6.5 L7 2.5 L10.5 6 L6.5 10 Z" stroke="#444" stroke-width="1" fill="none"/><path d="M9 2 C11 2.5 11.5 4.5 11 6.5" stroke="#2b8ad8" stroke-width="1.1" fill="none"/><rect x="1" y="12" width="12" height="2" stroke="#777" stroke-width="0.7" fill="none"/></svg>
<svg class="r" style="left:577px;top:234px;" width="5" height="4" viewBox="0 0 5 4"><path d="M0.5 0.5 L2.5 3.2 L4.5 0.5" stroke="#444" stroke-width="1" fill="none"/></svg>
<div class="r" style="left:588.3px;top:225px;width:30.2px;height:18.5px;background:#e5e5e5;border:1px solid #a0a0a0;border-radius:3px"></div>
<svg class="r" style="left:591px;top:228px;" width="13" height="13" viewBox="0 0 13 13"><path d="M0.5 0.5 H12.5 V12.5 H0.5 Z M6.5 0.5 V12.5 M0.5 6.5 H12.5" stroke="#666" stroke-width="0.9" stroke-dasharray="1.2 1" fill="none"/><path d="M0.5 12.3 H12.5" stroke="#333" stroke-width="1.2"/></svg>
<svg class="r" style="left:609.4px;top:233.5px;" width="5" height="4" viewBox="0 0 5 4"><path d="M0.5 0.5 L2.5 3.2 L4.5 0.5" stroke="#444" stroke-width="1" fill="none"/></svg>
<div class="t" style="left:509.2px;top:258px;font-size:8.91px;line-height:8.91px;color:#3a3a3a;font-weight:400;font-family:'Liberation Sans';">Абзац</div>
<svg class="r" style="left:617.5px;top:258.5px;" width="8" height="7" viewBox="0 0 8 7"><path d="M0.5 6.5 V0.5 H6" stroke="#555" stroke-width="0.9" fill="none"/><path d="M3 3 L7 6.5 M7 3.5 V6.5 H4" stroke="#555" stroke-width="0.9" fill="none"/></svg>
<div class="r" style="left:627px;top:195px;width:1px;height:69px;background:#dcdcdc"></div>
<svg class="r" style="left:636.5px;top:197px;" width="14" height="13" viewBox="0 0 14 13"><circle cx="8.8" cy="4.8" r="3.9" stroke="#444" stroke-width="1.1" fill="none"/><path d="M6 7.8 L1 12.5" stroke="#444" stroke-width="1.3"/></svg>
<div class="t" style="left:652.7px;top:200px;font-size:9.36px;line-height:9.36px;color:#262626;font-weight:400;font-family:'Liberation Sans';">Найти</div>
<svg class="r" style="left:693.3px;top:203px;" width="5" height="4" viewBox="0 0 5 4"><path d="M0.5 0.5 L2.5 3.2 L4.5 0.5" stroke="#444" stroke-width="1" fill="none"/></svg>
<svg class="r" style="left:636.5px;top:218px;" width="12" height="12" viewBox="0 0 12 12"><path d="M3.5 3 C1 4.5 0.8 8.5 3.5 10.5 M2 8.5 L3.5 10.5 L5.5 9.5" stroke="#2b8ad8" stroke-width="1" fill="none"/><text x="6.5" y="5.5" font-size="6.5" font-family="Liberation Sans" fill="#c04ec8">b</text><text x="7.5" y="11.5" font-size="6.5" font-family="Liberation Sans" fill="#2b8ad8">c</text></svg>
<div class="t" style="left:652.7px;top:221px;font-size:9.26px;line-height:9.26px;color:#262626;font-weight:400;font-family:'Liberation Sans';">Заменить</div>
<svg class="r" style="left:637.5px;top:238px;" width="10" height="13" viewBox="0 0 10 13"><path d="M1 1 V11 L3.5 8.8 L5.5 12.5 L7 11.8 L5.2 8.2 H8.5 Z" stroke="#444" stroke-width="0.9" fill="none" stroke-linejoin="round"/></svg>
<div class="t" style="left:652.7px;top:241px;font-size:9.26px;line-height:9.26px;color:#262626;font-weight:400;font-family:'Liberation Sans';">Выделить</div>
<svg class="r" style="left:698px;top:244px;" width="5" height="4" viewBox="0 0 5 4"><path d="M0.5 0.5 L2.5 3.2 L4.5 0.5" stroke="#444" stroke-width="1" fill="none"/></svg>
<div class="t" style="left:637.5px;top:258px;font-size:9.02px;line-height:9.02px;color:#3a3a3a;font-weight:400;font-family:'Liberation Sans';">Редактирование</div>
<div class="r" style="left:716.5px;top:195px;width:1px;height:69px;background:#dcdcdc"></div>
<svg class="r" style="left:762.5px;top:199.5px;" width="21" height="21" viewBox="0 0 21 21"><path d="M2 1 H10 L14 5 V8.5 M2 1 V17 H9" stroke="#1a6fe0" stroke-width="1.8" fill="none" stroke-linejoin="round"/><path d="M10 1 V5 H14" stroke="#1a6fe0" stroke-width="1.5" fill="none"/><path d="M10.5 12 V19.5 H19.5 V12" stroke="#1a6fe0" stroke-width="1.8" fill="none"/><path d="M15 17 V9 M12.5 11 L15 8.5 L17.5 11" stroke="#1a6fe0" stroke-width="1.6" fill="none"/></svg>
<div class="t" style="left:724.6px;top:226px;font-size:9.14px;line-height:9.14px;color:#262626;font-weight:400;font-family:'Liberation Sans';">Создать и поделиться</div>
<div class="t" style="left:748.3px;top:239px;font-size:9.14px;line-height:9.14px;color:#262626;font-weight:400;font-family:'Liberation Sans';">Adobe PDF</div>
<svg class="r" style="left:834.5px;top:197.5px;" width="26" height="23" viewBox="0 0 26 23"><circle cx="10" cy="6" r="4.8" stroke="#1a6fe0" stroke-width="1.6" fill="none"/><path d="M1.5 17 C2 12.5 5 11 10 11 C12 11 13.5 11.3 14.5 12" stroke="#1a6fe0" stroke-width="1.6" fill="none"/><path d="M1.5 17 H9" stroke="#1a6fe0" stroke-width="1.6"/><path d="M11 13.5 L13 16 M13 13.5 L11 16 M15 16 L16.5 13.5 L18 16 L19.5 13.5 L21 16" stroke="#1a6fe0" stroke-width="0.9" fill="none"/><rect x="10.5" y="18.5" width="14" height="1.6" fill="#1a3fa0"/></svg>
<div class="t" style="left:823.9px;top:226px;font-size:9.14px;line-height:9.14px;color:#262626;font-weight:400;font-family:'Liberation Sans';">Запросить</div>
<div class="t" style="left:828.8px;top:239px;font-size:9.14px;line-height:9.14px;color:#262626;font-weight:400;font-family:'Liberation Sans';">подписи</div>
<div class="t" style="left:766.9px;top:258px;font-size:9.3px;line-height:9.3px;color:#3a3a3a;font-weight:400;font-family:'Liberation Sans';">Adobe Acrobat</div>
<div class="r" style="left:878px;top:195px;width:1px;height:69px;background:#dcdcdc"></div>
<svg class="r" style="left:897.5px;top:196.5px;" width="25" height="25" viewBox="0 0 25 25"><path d="M2.5 23.5 L3.5 16 L15.5 2.5 L19 5.5 L7.5 19.5 Z" stroke="#1b4fbf" stroke-width="1.6" fill="none" stroke-linejoin="round"/><path d="M14 4 L17.5 7" stroke="#1b4fbf" stroke-width="1.2"/><path d="M12 7.5 H24 M10.5 11.5 H22 M9 15.5 H17" stroke="#1b5fd0" stroke-width="2.6" stroke-linecap="round"/></svg>
<div class="t" style="left:886.8px;top:225px;font-size:9.55px;line-height:9.55px;color:#262626;font-weight:400;font-family:'Liberation Sans';">Корректор</div>
<div class="t" style="left:887.6px;top:257px;font-size:9.5px;line-height:9.5px;color:#3a3a3a;font-weight:400;font-family:'Liberation Sans';">Корректор</div>
<div class="r" style="left:941px;top:195px;width:1px;height:69px;background:#dcdcdc"></div>
<svg class="r" style="left:964px;top:197px;" width="23" height="23" viewBox="0 0 23 23"><rect x="0.8" y="0.8" width="21.4" height="21.4" stroke="#e04a4a" stroke-width="1.2" fill="#fff3f3"/><rect x="3.5" y="3.5" width="6.8" height="6.8" stroke="#e04a4a" stroke-width="1.2" fill="#fff"/><rect x="12.7" y="3.5" width="6.8" height="6.8" stroke="#e04a4a" stroke-width="1.2" fill="#fff"/><rect x="3.5" y="12.7" width="6.8" height="6.8" stroke="#e04a4a" stroke-width="1.2" fill="#fff"/><rect x="12.7" y="12.7" width="6.8" height="6.8" stroke="#e04a4a" stroke-width="1.2" fill="#fff"/></svg>
<div class="t" style="left:949.6px;top:226px;font-size:9.37px;line-height:9.37px;color:#262626;font-weight:400;font-family:'Liberation Sans';">Надстройки</div>
<div class="t" style="left:950.6px;top:258px;font-size:9.3px;line-height:9.3px;color:#3a3a3a;font-weight:400;font-family:'Liberation Sans';">Надстройки</div>
<div class="r" style="left:1009px;top:195px;width:1px;height:69px;background:#dcdcdc"></div>
<svg class="r" style="left:1499px;top:255px;" width="11" height="7" viewBox="0 0 11 7"><path d="M1 1 L5.5 5.5 L10 1" stroke="#444" stroke-width="1.2" fill="none"/></svg>
<div class="r" style="left:6px;top:269px;width:1516px;height:19px;background:#f0eef1"></div>
<div class="r" style="left:92px;top:271.5px;width:1351px;height:11px;background:#ffffff"></div>
<svg class="r" style="left:11px;top:274px;" width="8" height="9" viewBox="0 0 8 9"><path d="M2 1 V7 H7" stroke="#444" stroke-width="1.6" fill="none"/></svg>
<div class="r" style="left:24px;top:269px;width:1px;height:664px;background:#d9d9dc"></div>
<div class="r" style="left:63.64px;top:275.5px;width:1px;height:4.5px;background:#777"></div>
<div class="r" style="left:75.5px;top:277.5px;width:1.3px;height:1.3px;background:#666"></div>
<div class="r" style="left:99.42px;top:277.5px;width:1.3px;height:1.3px;background:#666"></div>
<div class="r" style="left:111.48px;top:275.5px;width:1px;height:4.5px;background:#777"></div>
<div class="r" style="left:123.34px;top:277.5px;width:1.3px;height:1.3px;background:#666"></div>
<div class="t" style="left:125.90px;width:20px;text-align:center;top:272px;font-size:9.2px;line-height:11px;color:#505050">1</div>
<div class="r" style="left:147.26px;top:277.5px;width:1.3px;height:1.3px;background:#666"></div>
<div class="r" style="left:159.32px;top:275.5px;width:1px;height:4.5px;background:#777"></div>
<div class="r" style="left:171.18px;top:277.5px;width:1.3px;height:1.3px;background:#666"></div>
<div class="t" style="left:173.74px;width:20px;text-align:center;top:272px;font-size:9.2px;line-height:11px;color:#505050">2</div>
<div class="r" style="left:195.1px;top:277.5px;width:1.3px;height:1.3px;background:#666"></div>
<div class="r" style="left:207.16px;top:275.5px;width:1px;height:4.5px;background:#777"></div>
<div class="r" style="left:219.02px;top:277.5px;width:1.3px;height:1.3px;background:#666"></div>
<div class="t" style="left:221.58px;width:20px;text-align:center;top:272px;font-size:9.2px;line-height:11px;color:#505050">3</div>
<div class="r" style="left:242.94px;top:277.5px;width:1.3px;height:1.3px;background:#666"></div>
<div class="r" style="left:255.0px;top:275.5px;width:1px;height:4.5px;background:#777"></div>
<div class="r" style="left:266.86px;top:277.5px;width:1.3px;height:1.3px;background:#666"></div>
<div class="t" style="left:269.42px;width:20px;text-align:center;top:272px;font-size:9.2px;line-height:11px;color:#505050">4</div>
<div class="r" style="left:290.78px;top:277.5px;width:1.3px;height:1.3px;background:#666"></div>
<div class="r" style="left:302.84px;top:275.5px;width:1px;height:4.5px;background:#777"></div>
<div class="r" style="left:314.7px;top:277.5px;width:1.3px;height:1.3px;background:#666"></div>
<div class="t" style="left:317.26px;width:20px;text-align:center;top:272px;font-size:9.2px;line-height:11px;color:#505050">5</div>
<div class="r" style="left:338.62px;top:277.5px;width:1.3px;height:1.3px;background:#666"></div>
<div class="r" style="left:350.68px;top:275.5px;width:1px;height:4.5px;background:#777"></div>
<div class="r" style="left:362.54px;top:277.5px;width:1.3px;height:1.3px;background:#666"></div>
<div class="t" style="left:365.10px;width:20px;text-align:center;top:272px;font-size:9.2px;line-height:11px;color:#505050">6</div>
<div class="r" style="left:386.46px;top:277.5px;width:1.3px;height:1.3px;background:#666"></div>
<div class="r" style="left:398.52px;top:275.5px;width:1px;height:4.5px;background:#777"></div>
<div class="r" style="left:410.38px;top:277.5px;width:1.3px;height:1.3px;background:#666"></div>
<div class="t" style="left:412.94px;width:20px;text-align:center;top:272px;font-size:9.2px;line-height:11px;color:#505050">7</div>
<div class="r" style="left:434.3px;top:277.5px;width:1.3px;height:1.3px;background:#666"></div>
<div class="r" style="left:446.36px;top:275.5px;width:1px;height:4.5px;background:#777"></div>
<div class="r" style="left:458.22px;top:277.5px;width:1.3px;height:1.3px;background:#666"></div>
<div class="t" style="left:460.78px;width:20px;text-align:center;top:272px;font-size:9.2px;line-height:11px;color:#505050">8</div>
<div class="r" style="left:482.14px;top:277.5px;width:1.3px;height:1.3px;background:#666"></div>
<div class="r" style="left:494.2px;top:275.5px;width:1px;height:4.5px;background:#777"></div>
<div class="r" style="left:506.06px;top:277.5px;width:1.3px;height:1.3px;background:#666"></div>
<div class="t" style="left:508.62px;width:20px;text-align:center;top:272px;font-size:9.2px;line-height:11px;color:#505050">9</div>
<div class="r" style="left:529.98px;top:277.5px;width:1.3px;height:1.3px;background:#666"></div>
<div class="r" style="left:542.04px;top:275.5px;width:1px;height:4.5px;background:#777"></div>
<div class="r" style="left:553.9px;top:277.5px;width:1.3px;height:1.3px;background:#666"></div>
<div class="t" style="left:556.46px;width:20px;text-align:center;top:272px;font-size:9.2px;line-height:11px;color:#505050">10</div>
<div class="r" style="left:577.82px;top:277.5px;width:1.3px;height:1.3px;background:#666"></div>
<div class="r" style="left:589.88px;top:275.5px;width:1px;height:4.5px;background:#777"></div>
<div class="r" style="left:601.74px;top:277.5px;width:1.3px;height:1.3px;background:#666"></div>
<div class="t" style="left:604.30px;width:20px;text-align:center;top:272px;font-size:9.2px;line-height:11px;color:#505050">11</div>
<div class="r" style="left:625.66px;top:277.5px;width:1.3px;height:1.3px;background:#666"></div>
<div class="r" style="left:637.72px;top:275.5px;width:1px;height:4.5px;background:#777"></div>
<div class="r" style="left:649.58px;top:277.5px;width:1.3px;height:1.3px;background:#666"></div>
<div class="t" style="left:652.14px;width:20px;text-align:center;top:272px;font-size:9.2px;line-height:11px;color:#505050">12</div>
<div class="r" style="left:673.5px;top:277.5px;width:1.3px;height:1.3px;background:#666"></div>
<div class="r" style="left:685.56px;top:275.5px;width:1px;height:4.5px;background:#777"></div>
<div class="r" style="left:697.42px;top:277.5px;width:1.3px;height:1.3px;background:#666"></div>
<div class="t" style="left:699.98px;width:20px;text-align:center;top:272px;font-size:9.2px;line-height:11px;color:#505050">13</div>
<div class="r" style="left:721.34px;top:277.5px;width:1.3px;height:1.3px;background:#666"></div>
<div class="r" style="left:733.4px;top:275.5px;width:1px;height:4.5px;background:#777"></div>
<div class="r" style="left:745.26px;top:277.5px;width:1.3px;height:1.3px;background:#666"></div>
<div class="t" style="left:747.82px;width:20px;text-align:center;top:272px;font-size:9.2px;line-height:11px;color:#505050">14</div>
<div class="r" style="left:769.18px;top:277.5px;width:1.3px;height:1.3px;background:#666"></div>
<div class="r" style="left:781.24px;top:275.5px;width:1px;height:4.5px;background:#777"></div>
<div class="r" style="left:793.1px;top:277.5px;width:1.3px;height:1.3px;background:#666"></div>
<div class="t" style="left:795.66px;width:20px;text-align:center;top:272px;font-size:9.2px;line-height:11px;color:#505050">15</div>
<div class="r" style="left:817.02px;top:277.5px;width:1.3px;height:1.3px;background:#666"></div>
<div class="r" style="left:829.08px;top:275.5px;width:1px;height:4.5px;background:#777"></div>
<div class="r" style="left:840.94px;top:277.5px;width:1.3px;height:1.3px;background:#666"></div>
<div class="t" style="left:843.50px;width:20px;text-align:center;top:272px;font-size:9.2px;line-height:11px;color:#505050">16</div>
<div class="r" style="left:864.86px;top:277.5px;width:1.3px;height:1.3px;background:#666"></div>
<div class="r" style="left:876.92px;top:275.5px;width:1px;height:4.5px;background:#777"></div>
<div class="r" style="left:888.78px;top:277.5px;width:1.3px;height:1.3px;background:#666"></div>
<div class="t" style="left:891.34px;width:20px;text-align:center;top:272px;font-size:9.2px;line-height:11px;color:#505050">17</div>
<div class="r" style="left:912.7px;top:277.5px;width:1.3px;height:1.3px;background:#666"></div>
<div class="r" style="left:924.76px;top:275.5px;width:1px;height:4.5px;background:#777"></div>
<div class="r" style="left:936.62px;top:277.5px;width:1.3px;height:1.3px;background:#666"></div>
<div class="t" style="left:939.18px;width:20px;text-align:center;top:272px;font-size:9.2px;line-height:11px;color:#505050">18</div>
<div class="r" style="left:960.54px;top:277.5px;width:1.3px;height:1.3px;background:#666"></div>
<div class="r" style="left:972.6px;top:275.5px;width:1px;height:4.5px;background:#777"></div>
<div class="r" style="left:984.46px;top:277.5px;width:1.3px;height:1.3px;background:#666"></div>
<div class="t" style="left:987.02px;width:20px;text-align:center;top:272px;font-size:9.2px;line-height:11px;color:#505050">19</div>
<div class="r" style="left:1008.38px;top:277.5px;width:1.3px;height:1.3px;background:#666"></div>
<div class="r" style="left:1020.44px;top:275.5px;width:1px;height:4.5px;background:#777"></div>
<div class="r" style="left:1032.3px;top:277.5px;width:1.3px;height:1.3px;background:#666"></div>
<div class="t" style="left:1034.86px;width:20px;text-align:center;top:272px;font-size:9.2px;line-height:11px;color:#505050">20</div>
<div class="r" style="left:1056.22px;top:277.5px;width:1.3px;height:1.3px;background:#666"></div>
<div class="r" style="left:1068.28px;top:275.5px;width:1px;height:4.5px;background:#777"></div>
<div class="r" style="left:1080.14px;top:277.5px;width:1.3px;height:1.3px;background:#666"></div>
<div class="t" style="left:1082.70px;width:20px;text-align:center;top:272px;font-size:9.2px;line-height:11px;color:#505050">21</div>
<div class="r" style="left:1104.06px;top:277.5px;width:1.3px;height:1.3px;background:#666"></div>
<div class="r" style="left:1116.12px;top:275.5px;width:1px;height:4.5px;background:#777"></div>
<div class="r" style="left:1127.98px;top:277.5px;width:1.3px;height:1.3px;background:#666"></div>
<div class="t" style="left:1130.54px;width:20px;text-align:center;top:272px;font-size:9.2px;line-height:11px;color:#505050">22</div>
<div class="r" style="left:1151.9px;top:277.5px;width:1.3px;height:1.3px;background:#666"></div>
<div class="r" style="left:1163.96px;top:275.5px;width:1px;height:4.5px;background:#777"></div>
<div class="r" style="left:1175.82px;top:277.5px;width:1.3px;height:1.3px;background:#666"></div>
<div class="t" style="left:1178.38px;width:20px;text-align:center;top:272px;font-size:9.2px;line-height:11px;color:#505050">23</div>
<div class="r" style="left:1199.74px;top:277.5px;width:1.3px;height:1.3px;background:#666"></div>
<div class="r" style="left:1211.8px;top:275.5px;width:1px;height:4.5px;background:#777"></div>
<div class="r" style="left:1223.66px;top:277.5px;width:1.3px;height:1.3px;background:#666"></div>
<div class="t" style="left:1226.22px;width:20px;text-align:center;top:272px;font-size:9.2px;line-height:11px;color:#505050">24</div>
<div class="r" style="left:1247.58px;top:277.5px;width:1.3px;height:1.3px;background:#666"></div>
<div class="r" style="left:1259.64px;top:275.5px;width:1px;height:4.5px;background:#777"></div>
<div class="r" style="left:1271.5px;top:277.5px;width:1.3px;height:1.3px;background:#666"></div>
<div class="t" style="left:1274.06px;width:20px;text-align:center;top:272px;font-size:9.2px;line-height:11px;color:#505050">25</div>
<div class="r" style="left:1295.42px;top:277.5px;width:1.3px;height:1.3px;background:#666"></div>
<div class="r" style="left:1307.48px;top:275.5px;width:1px;height:4.5px;background:#777"></div>
<div class="r" style="left:1319.34px;top:277.5px;width:1.3px;height:1.3px;background:#666"></div>
<div class="t" style="left:1321.90px;width:20px;text-align:center;top:272px;font-size:9.2px;line-height:11px;color:#505050">26</div>
<div class="r" style="left:1343.26px;top:277.5px;width:1.3px;height:1.3px;background:#666"></div>
<div class="r" style="left:1355.32px;top:275.5px;width:1px;height:4.5px;background:#777"></div>
<div class="r" style="left:1367.18px;top:277.5px;width:1.3px;height:1.3px;background:#666"></div>
<div class="t" style="left:1369.74px;width:20px;text-align:center;top:272px;font-size:9.2px;line-height:11px;color:#505050">27</div>
<div class="r" style="left:1391.1px;top:277.5px;width:1.3px;height:1.3px;background:#666"></div>
<div class="r" style="left:1403.16px;top:275.5px;width:1px;height:4.5px;background:#777"></div>
<div class="r" style="left:1415.02px;top:277.5px;width:1.3px;height:1.3px;background:#666"></div>
<div class="t" style="left:1417.58px;width:20px;text-align:center;top:272px;font-size:9.2px;line-height:11px;color:#505050">28</div>
<div class="r" style="left:1438.94px;top:277.5px;width:1.3px;height:1.3px;background:#666"></div>
<div class="r" style="left:1451.0px;top:275.5px;width:1px;height:4.5px;background:#777"></div>
<div class="r" style="left:1462.86px;top:277.5px;width:1.3px;height:1.3px;background:#666"></div>
<svg class="r" style="left:81.5px;top:270.5px;" width="11" height="18" viewBox="0 0 11 18"><path d="M1 1 H10 V3.5 L5.5 8 L1 3.5 Z" stroke="#777" stroke-width="0.9" fill="#fdfdfd"/><path d="M5.5 8 L10 12 V13 H1 V12 Z" stroke="#777" stroke-width="0.9" fill="#fdfdfd"/><rect x="1" y="13" width="9" height="4.5" stroke="#777" stroke-width="0.9" fill="#fdfdfd"/></svg>
<svg class="r" style="left:74px;top:274px;" width="7" height="7" viewBox="0 0 7 7"><path d="M1.5 0 V7 M5 0 V7 M0 2 H7 M0 5 H7" stroke="#888" stroke-width="0.9"/></svg>
<svg class="r" style="left:1438.5px;top:274px;" width="11" height="10" viewBox="0 0 11 10"><path d="M0.5 9.5 V5.5 L5.5 1 L10.5 5.5 V9.5 Z" stroke="#777" stroke-width="0.9" fill="#fdfdfd"/></svg>
<svg class="r" style="left:1448.5px;top:274px;" width="6" height="7" viewBox="0 0 6 7"><path d="M1.5 0 V7 M4.5 0 V7 M0 2 H6 M0 5 H6" stroke="#888" stroke-width="0.9"/></svg>
<div class="r" style="left:9px;top:320px;width:10px;height:301px;background:#ffffff"></div>
<div class="r" style="left:9px;top:628px;width:10px;height:211px;background:#ffffff"></div>
<div class="r" style="left:9px;top:847px;width:10px;height:86px;background:#ffffff"></div>
<div class="r" style="left:9px;top:290px;width:10px;height:23px;background:#ffffff"></div>
<div class="r" style="left:14.6px;top:301.36px;width:1.3px;height:1.3px;background:#555"></div>
<div class="r" style="left:13.2px;top:313.42px;width:4px;height:1px;background:#777"></div>
<div class="r" style="left:14.6px;top:325.28px;width:1.3px;height:1.3px;background:#555"></div>
<div class="t" style="left:5px;width:20px;text-align:center;top:332.34px;font-size:9.2px;line-height:11px;color:#505050;transform:rotate(-90deg)">1</div>
<div class="r" style="left:14.6px;top:349.2px;width:1.3px;height:1.3px;background:#555"></div>
<div class="r" style="left:13.2px;top:361.26px;width:4px;height:1px;background:#777"></div>
<div class="r" style="left:14.6px;top:373.12px;width:1.3px;height:1.3px;background:#555"></div>
<div class="t" style="left:5px;width:20px;text-align:center;top:380.18px;font-size:9.2px;line-height:11px;color:#505050;transform:rotate(-90deg)">2</div>
<div class="r" style="left:14.6px;top:397.04px;width:1.3px;height:1.3px;background:#555"></div>
<div class="r" style="left:13.2px;top:409.1px;width:4px;height:1px;background:#777"></div>
<div class="r" style="left:14.6px;top:420.96px;width:1.3px;height:1.3px;background:#555"></div>
<div class="t" style="left:5px;width:20px;text-align:center;top:428.02px;font-size:9.2px;line-height:11px;color:#505050;transform:rotate(-90deg)">3</div>
<div class="r" style="left:14.6px;top:444.88px;width:1.3px;height:1.3px;background:#555"></div>
<div class="r" style="left:13.2px;top:456.94px;width:4px;height:1px;background:#777"></div>
<div class="r" style="left:14.6px;top:468.8px;width:1.3px;height:1.3px;background:#555"></div>
<div class="t" style="left:5px;width:20px;text-align:center;top:475.86px;font-size:9.2px;line-height:11px;color:#505050;transform:rotate(-90deg)">4</div>
<div class="r" style="left:14.6px;top:492.72px;width:1.3px;height:1.3px;background:#555"></div>
<div class="r" style="left:13.2px;top:504.78px;width:4px;height:1px;background:#777"></div>
<div class="r" style="left:14.6px;top:516.64px;width:1.3px;height:1.3px;background:#555"></div>
<div class="t" style="left:5px;width:20px;text-align:center;top:523.70px;font-size:9.2px;line-height:11px;color:#505050;transform:rotate(-90deg)">5</div>
<div class="r" style="left:14.6px;top:540.56px;width:1.3px;height:1.3px;background:#555"></div>
<div class="r" style="left:13.2px;top:552.62px;width:4px;height:1px;background:#777"></div>
<div class="r" style="left:14.6px;top:564.48px;width:1.3px;height:1.3px;background:#555"></div>
<div class="t" style="left:5px;width:20px;text-align:center;top:571.54px;font-size:9.2px;line-height:11px;color:#505050;transform:rotate(-90deg)">6</div>
<div class="r" style="left:14.6px;top:588.4px;width:1.3px;height:1.3px;background:#555"></div>
<div class="r" style="left:13.2px;top:600.46px;width:4px;height:1px;background:#777"></div>
<div class="r" style="left:14.6px;top:612.32px;width:1.3px;height:1.3px;background:#555"></div>
<div class="r" style="left:14.6px;top:636.24px;width:1.3px;height:1.3px;background:#555"></div>
<div class="r" style="left:13.2px;top:648.3px;width:4px;height:1px;background:#777"></div>
<div class="r" style="left:14.6px;top:660.16px;width:1.3px;height:1.3px;background:#555"></div>
<div class="t" style="left:5px;width:20px;text-align:center;top:667.22px;font-size:9.2px;line-height:11px;color:#505050;transform:rotate(-90deg)">8</div>
<div class="r" style="left:14.6px;top:684.08px;width:1.3px;height:1.3px;background:#555"></div>
<div class="r" style="left:13.2px;top:696.14px;width:4px;height:1px;background:#777"></div>
<div class="r" style="left:14.6px;top:708.0px;width:1.3px;height:1.3px;background:#555"></div>
<div class="t" style="left:5px;width:20px;text-align:center;top:715.06px;font-size:9.2px;line-height:11px;color:#505050;transform:rotate(-90deg)">9</div>
<div class="r" style="left:14.6px;top:731.92px;width:1.3px;height:1.3px;background:#555"></div>
<div class="r" style="left:13.2px;top:743.98px;width:4px;height:1px;background:#777"></div>
<div class="r" style="left:14.6px;top:755.84px;width:1.3px;height:1.3px;background:#555"></div>
<div class="t" style="left:5px;width:20px;text-align:center;top:762.90px;font-size:9.2px;line-height:11px;color:#505050;transform:rotate(-90deg)">10</div>
<div class="r" style="left:14.6px;top:779.76px;width:1.3px;height:1.3px;background:#555"></div>
<div class="r" style="left:13.2px;top:791.82px;width:4px;height:1px;background:#777"></div>
<div class="r" style="left:14.6px;top:803.68px;width:1.3px;height:1.3px;background:#555"></div>
<div class="t" style="left:5px;width:20px;text-align:center;top:810.74px;font-size:9.2px;line-height:11px;color:#505050;transform:rotate(-90deg)">11</div>
<div class="r" style="left:14.6px;top:827.6px;width:1.3px;height:1.3px;background:#555"></div>
<div class="r" style="left:13.2px;top:839.66px;width:4px;height:1px;background:#777"></div>
<div class="r" style="left:14.6px;top:851.52px;width:1.3px;height:1.3px;background:#555"></div>
<div class="t" style="left:5px;width:20px;text-align:center;top:858.58px;font-size:9.2px;line-height:11px;color:#505050;transform:rotate(-90deg)">12</div>
<div class="r" style="left:14.6px;top:875.44px;width:1.3px;height:1.3px;background:#555"></div>
<div class="r" style="left:13.2px;top:887.5px;width:4px;height:1px;background:#777"></div>
<div class="r" style="left:14.6px;top:899.36px;width:1.3px;height:1.3px;background:#555"></div>
<div class="t" style="left:5px;width:20px;text-align:center;top:906.42px;font-size:9.2px;line-height:11px;color:#505050;transform:rotate(-90deg)">13</div>
<div class="r" style="left:14.6px;top:923.28px;width:1.3px;height:1.3px;background:#555"></div>
<div class="r" style="left:25px;top:288px;width:1497px;height:645px;background:#f0eef1"></div>
<div class="r" style="left:57px;top:288px;width:1420px;height:645px;background:#ffffff"></div>
<div class="r" style="left:6px;top:287.5px;width:1516px;height:1px;background:#e2e1e5"></div>
<div class="r" style="left:1476px;top:288px;width:1px;height:645px;background:#d0d0d3"></div>
<div class="r" style="left:0;top:288px;width:1522px;height:645px;overflow:hidden">
<div class="r" style="left:79px;top:2.00px;width:1px;height:650px;background:#707070"></div>
<div class="r" style="left:1452px;top:2.00px;width:1px;height:650px;background:#707070"></div>
<div class="r" style="left:326px;top:26.00px;width:1px;height:650px;background:#707070"></div>
<div class="r" style="left:79px;top:2.00px;width:1374px;height:1px;background:#000"></div>
<div class="r" style="left:79px;top:3.00px;width:1374px;height:1px;background:rgba(0,0,0,0.25)"></div>
<div class="r" style="left:79px;top:26.00px;width:1374px;height:1px;background:#666"></div>
<div class="r" style="left:79px;top:334.00px;width:1374px;height:1px;background:#333"></div>
<div class="r" style="left:79px;top:554.00px;width:1374px;height:1px;background:#333"></div>
<div class="r" style="left:424px;top:3.00px;width:90.5px;height:23px;background:#00ffff"></div>
<div class="t" style="left:424.8px;top:5.00px;font-size:20.37px;line-height:20.37px;color:#000;font-weight:400;font-family:'Liberation Serif';"><b>Пилотное внедрение новых моделей системы оплаты труда в образовании</b></div>
<div class="t" style="left:89.6px;top:29.00px;font-size:20.37px;line-height:20.37px;color:#000;font-weight:400;font-family:'Liberation Serif';">Принципы</div>
<div class="t" style="left:89.6px;top:53.00px;font-size:20.37px;line-height:20.37px;color:#000;font-weight:400;font-family:'Liberation Serif';">эффективности на уровне</div>
<div class="t" style="left:89.6px;top:76.00px;font-size:20.37px;line-height:20.37px;color:#000;font-weight:400;font-family:'Liberation Serif';">учреждения и на уровне</div>
<div class="t" style="left:89.6px;top:99.00px;font-size:20.37px;line-height:20.37px;color:#000;font-weight:400;font-family:'Liberation Serif';">работника</div>
<div class="t" style="left:89.6px;top:337.00px;font-size:20.37px;line-height:20.37px;color:#000;font-weight:400;font-family:'Liberation Serif';">Сложности и нарушения</div>
<div class="t" style="left:89.6px;top:361.00px;font-size:20.37px;line-height:20.37px;color:#000;font-weight:400;font-family:'Liberation Serif';">при совершенствовании</div>
<div class="t" style="left:89.6px;top:384.00px;font-size:20.37px;line-height:20.37px;color:#000;font-weight:400;font-family:'Liberation Serif';">системы оплаты труда</div>
<div class="t" style="left:89.6px;top:557.00px;font-size:20.37px;line-height:20.37px;color:#000;font-weight:400;font-family:'Liberation Serif';">Завершен в 2024 году</div>
<div class="t" style="left:89.6px;top:580.00px;font-size:20.37px;line-height:20.37px;color:#000;font-weight:400;font-family:'Liberation Serif';">очередной этап</div>
<div class="t" style="left:89.6px;top:603.00px;font-size:20.37px;line-height:20.37px;color:#000;font-weight:400;font-family:'Liberation Serif';">преобразования системы</div>
<div class="t" style="left:89.6px;top:626.00px;font-size:20.37px;line-height:20.37px;color:#000;font-weight:400;font-family:'Liberation Serif';">оплаты и усиление</div>
<div class="t" style="left:335.6px;top:29.00px;font-size:20.37px;line-height:20.37px;color:#000;font-weight:400;font-family:'Liberation Serif';"><b>Деятельность организации бюджетной сферы в рамках новой системы оплаты труда предполагает соблюдение</b></div>
<div class="t" style="left:335.6px;top:53.00px;font-size:20.37px;line-height:20.37px;color:#000;font-weight:400;font-family:'Liberation Serif';"><b>требований к эффективности как на уровне сотрудников, так и на уровне учреждения.</b></div>
<div class="t" style="left:335.6px;top:100.00px;font-size:20.37px;line-height:20.37px;color:#000;font-weight:400;font-family:'Liberation Serif';"><b>Эффективность на уровне учреждения</b> - эффективность использования бюджетных средств при выплатах сотрудникам:</div>
<div class="r" style="left:366.8px;top:131.85px;width:7.2px;height:7.2px;background:#000;border-radius:50%"></div>
<div class="t" style="left:396.7px;top:124.00px;font-size:20.37px;line-height:20.37px;color:#000;font-weight:400;font-family:'Liberation Serif';">Экономичность - соотношение между ресурсами и результатами их использования.</div>
<div class="r" style="left:366.8px;top:156.60px;width:7.2px;height:7.2px;background:#000;border-radius:50%"></div>
<div class="t" style="left:396.7px;top:149.00px;font-size:20.37px;line-height:20.37px;color:#000;font-weight:400;font-family:'Liberation Serif';">Результативность- количество затрат на единицу оказанной услуги учреждения.</div>
<div class="r" style="left:366.8px;top:181.60px;width:7.2px;height:7.2px;background:#000;border-radius:50%"></div>
<div class="t" style="left:396.7px;top:174.00px;font-size:20.37px;line-height:20.37px;color:#000;font-weight:400;font-family:'Liberation Serif';">Продуктивность - степень достижения намеченных целей или решения поставленных задач.</div>
<div class="t" style="left:335.6px;top:220.00px;font-size:20.37px;line-height:20.37px;color:#000;font-weight:400;font-family:'Liberation Serif';width:1108.5px;text-align:justify;text-align-last:justify;white-space:normal"><b>Эффективность на уровне сотрудника</b> – актуальные должностные обязанности и контроль качества их выполнения</div>
<div class="t" style="left:335.6px;top:244.00px;font-size:20.37px;line-height:20.37px;color:#000;font-weight:400;font-family:'Liberation Serif';">посредством показателей эффективности работы (эффективный контракт).</div>
<div class="t" style="left:335.6px;top:267.00px;font-size:20.37px;line-height:20.37px;color:#000;font-weight:400;font-family:'Liberation Serif';">Показатели эффективности устанавливают, чтобы оценить результаты работы сотрудников, а также увязать их через доход с</div>
<div class="t" style="left:335.6px;top:291.00px;font-size:20.37px;line-height:20.37px;color:#000;font-weight:400;font-family:'Liberation Serif';">деятельностью и целями учреждений. При таком подходе доход сотрудников напрямую зависит от объема и качества их</div>
<div class="t" style="left:335.6px;top:313.00px;font-size:20.37px;line-height:20.37px;color:#000;font-weight:400;font-family:'Liberation Serif';">работы и персонал.</div>
<div class="t" style="left:335.6px;top:337.00px;font-size:20.37px;line-height:20.37px;color:#000;font-weight:400;font-family:'Liberation Serif';">Внимание контролирующих органов к ходу совершенствования системы оплаты труда сконцентрировано на проблемах:</div>
<div class="r" style="left:366.8px;top:370.00px;width:7.2px;height:7.2px;background:#000;border-radius:50%"></div>
<div class="t" style="left:396.7px;top:362.00px;font-size:20.37px;line-height:20.37px;color:#000;font-weight:400;font-family:'Liberation Serif';">сокращение разрыва между средним уровнем оплаты труда работников учреждений и средним уровнем заработной</div>
<div class="t" style="left:396.7px;top:385.00px;font-size:20.37px;line-height:20.37px;color:#000;font-weight:400;font-family:'Liberation Serif';">платы по субъекту Российской Федерации;</div>
<div class="r" style="left:366.8px;top:417.50px;width:7.2px;height:7.2px;background:#000;border-radius:50%"></div>
<div class="t" style="left:396.7px;top:410.00px;font-size:20.37px;line-height:20.37px;color:#000;font-weight:400;font-family:'Liberation Serif';">устранение необоснованной дифференциации в уровне оплаты труда руководителей и работников учреждений;</div>
<div class="r" style="left:366.8px;top:442.50px;width:7.2px;height:7.2px;background:#000;border-radius:50%"></div>
<div class="t" style="left:396.7px;top:435.00px;font-size:20.37px;line-height:20.37px;color:#000;font-weight:400;font-family:'Liberation Serif';">совершенствование системы критериев и показателей эффективности деятельности учреждений и работников;</div>
<div class="r" style="left:366.8px;top:467.50px;width:7.2px;height:7.2px;background:#000;border-radius:50%"></div>
<div class="t" style="left:396.7px;top:460.00px;font-size:20.37px;line-height:20.37px;color:#000;font-weight:400;font-family:'Liberation Serif';"><b>запрет на осуществление стимулирующих выплат, установленных без учета показателей эффективности</b></div>
<div class="t" style="left:396.7px;top:483.00px;font-size:20.37px;line-height:20.37px;color:#000;font-weight:400;font-family:'Liberation Serif';"><b>деятельности учреждений и работников</b>;</div>
<div class="r" style="left:366.8px;top:515.35px;width:7.2px;height:7.2px;background:#000;border-radius:50%"></div>
<div class="t" style="left:396.7px;top:508.00px;font-size:20.37px;line-height:20.37px;color:#000;font-weight:400;font-family:'Liberation Serif';"><b>своевременное и корректное предоставление локальной отчетности по выплатам сотрудникам;</b></div>
<div class="r" style="left:366.8px;top:540.00px;width:7.2px;height:7.2px;background:#000;border-radius:50%"></div>
<div class="t" style="left:396.7px;top:532.00px;font-size:20.37px;line-height:20.37px;color:#000;font-weight:400;font-family:'Liberation Serif';"><b>внедрение и использование критериев оценки труда для работников (эффективный контракт).</b></div>
<div class="t" style="left:396.7px;top:556.00px;font-size:20.37px;line-height:20.37px;color:#000;font-weight:400;font-family:'Liberation Serif';"><b>Эффективность на уровне учреждения:</b></div>
<div class="t" style="left:335.6px;top:580.00px;font-size:20.37px;line-height:20.37px;color:#000;font-weight:400;font-family:'Liberation Serif';">Утверждена Концепция повышения эффективности бюджетных расходов на 2019–2024 годы (распоряжение Правительства</div>
<div class="t" style="left:335.6px;top:603.00px;font-size:20.37px;line-height:20.37px;color:#000;font-weight:400;font-family:'Liberation Serif';">от 31.01.2019 № 117-р). Основные задачи в рамках выше обозначенной концепции:</div>
<div class="t" style="left:335.6px;top:627.00px;font-size:20.37px;line-height:20.37px;color:#000;font-weight:400;font-family:'Liberation Serif';">-Стимулировать администраторов бюджетных средств к поиску внутренних резервов оптимизации бюджетных расходов в</div>
<svg class="r" style="left:585px;top:491px;top:203px" width="12" height="17" viewBox="0 0 12 17"><path d="M1 1 V13.5 L4 10.5 L6.5 15.5 L8.5 14.5 L6 9.8 H10.2 Z" fill="#fff" stroke="#222" stroke-width="1" stroke-linejoin="round"/></svg>
</div>
<div class="r" style="left:6px;top:933px;width:1516px;height:17px;background:#f3f3f3"></div>
<div class="t" style="left:15.7px;top:938px;font-size:8.94px;line-height:8.94px;color:#444;font-weight:400;font-family:'Liberation Sans';">Страница 2 из 5</div>
<div class="t" style="left:97.7px;top:938px;font-size:8.62px;line-height:8.62px;color:#444;font-weight:400;font-family:'Liberation Sans';">Число слов: 1790</div>
<svg class="r" style="left:181px;top:935px;" width="13" height="13" viewBox="0 0 13 13"><path d="M1 1 H7 V11 H1 Z" stroke="#555" stroke-width="0.9" fill="none"/><path d="M5 6 L11 12 M11 6 L5 12" stroke="#555" stroke-width="1"/></svg>
<div class="t" style="left:207.8px;top:938px;font-size:8.9px;line-height:8.9px;color:#444;font-weight:400;font-family:'Liberation Sans';">русский</div>
<div class="t" style="left:255.2px;top:938px;font-size:8.86px;line-height:8.86px;color:#444;font-weight:400;font-family:'Liberation Sans';">Предсказания текста: Вкл</div>
<svg class="r" style="left:376px;top:934px;" width="14" height="15" viewBox="0 0 14 15"><circle cx="4" cy="2.5" r="1.7" stroke="#222" stroke-width="1" fill="none"/><path d="M1 5 C3 6 5 6 7 5 L11 3.5 M5.5 6 L4.5 10 L2 13.5 M4.5 10 L7 12" stroke="#222" stroke-width="1.1" fill="none" stroke-linecap="round"/><path d="M8.5 9.5 L12.5 13.5 M12.5 9.5 L8.5 13.5" stroke="#222" stroke-width="1"/></svg>
<div class="t" style="left:392.6px;top:937px;font-size:9.42px;line-height:9.42px;color:#111;font-weight:400;font-family:'Liberation Sans';-webkit-text-stroke:0.3px #111">Специальные возможности: проверьте рекомендации</div>
<svg class="r" style="left:1205px;top:935px;" width="13" height="13" viewBox="0 0 13 13"><path d="M1 4 V1 H4 M9 1 H12 V4 M12 9 V12 H9 M4 12 H1 V9" stroke="#555" stroke-width="0.9" fill="none"/><path d="M4 2.5 H8 L9.5 4 V10.5 H4 Z" stroke="#555" stroke-width="0.9" fill="none"/></svg>
<div class="t" style="left:1219px;top:938px;font-size:9.0px;line-height:9.0px;color:#444;font-weight:400;font-family:'Liberation Sans';">Фокусировка</div>
<svg class="r" style="left:1292px;top:935px;" width="12" height="11" viewBox="0 0 12 11"><path d="M1 1 H5.5 V10 H1 Z M6.5 1 H11 V10 H6.5 Z M2 3.5 H4.5 M2 5.5 H4.5 M2 7.5 H4.5 M7.5 3.5 H10 M7.5 5.5 H10 M7.5 7.5 H10" stroke="#555" stroke-width="0.9" fill="none"/></svg>
<div class="r" style="left:1314px;top:934px;width:31px;height:16px;background:#e2e2e2"></div>
<svg class="r" style="left:1324px;top:935px;" width="10" height="12" viewBox="0 0 10 12"><path d="M1 0.5 H9 V11.5 H1 Z M2.5 3 H7.5 M2.5 5 H7.5 M2.5 7 H7.5 M2.5 9 H7.5" stroke="#555" stroke-width="0.9" fill="none"/></svg>
<svg class="r" style="left:1355px;top:935px;" width="12" height="12" viewBox="0 0 12 12"><path d="M0.5 0.5 H10.5 V6 M0.5 0.5 V10.5 H5 M0.5 3 H10.5 M2.5 5 H6 M2.5 7 H5" stroke="#555" stroke-width="0.9" fill="none"/><circle cx="8.5" cy="9" r="2.5" stroke="#555" stroke-width="0.9" fill="none"/></svg>
<div class="r" style="left:1382px;top:941.5px;width:7px;height:1px;background:#666"></div>
<div class="r" style="left:1392px;top:941.5px;width:78px;height:1px;background:#888"></div>
<div class="r" style="left:1391px;top:939px;width:1px;height:5px;background:#888"></div>
<div class="r" style="left:1434px;top:937.5px;width:3.5px;height:8px;background:#555"></div>
<div class="r" style="left:1475px;top:941.5px;width:7px;height:1px;background:#666"></div>
<div class="r" style="left:1478px;top:938px;width:1px;height:7px;background:#666"></div>
<div class="t" style="left:1492.5px;top:938px;font-size:9.0px;line-height:9.0px;color:#444;font-weight:400;font-family:'Liberation Sans';">160 %</div>
<svg class="r" style="left:1534px;top:433px" width="380" height="214" viewBox="0 0 380 214"><defs>
<filter id="b8" x="-50%" y="-50%" width="200%" height="200%"><feGaussianBlur stdDeviation="7"/></filter>
<filter id="b3" x="-50%" y="-50%" width="200%" height="200%"><feGaussianBlur stdDeviation="2.5"/></filter>
<filter id="b1" x="-20%" y="-20%" width="140%" height="140%"><feGaussianBlur stdDeviation="0.9"/></filter>
<filter id="b05" x="-20%" y="-20%" width="140%" height="140%"><feGaussianBlur stdDeviation="0.45"/></filter>
<linearGradient id="bgG" x1="0" y1="0" x2="1" y2="0.3">
<stop offset="0" stop-color="#eee6da"/><stop offset="0.4" stop-color="#ecdcc6"/><stop offset="0.7" stop-color="#e6d2bd"/><stop offset="1" stop-color="#ede5dc"/></linearGradient>
<radialGradient id="faceG" cx="0.52" cy="0.4" r="0.62"><stop offset="0" stop-color="#eac3c3"/><stop offset="0.55" stop-color="#dcaaae"/><stop offset="1" stop-color="#bf8a8c"/></radialGradient>
<linearGradient id="neckG" x1="0" y1="0" x2="0" y2="1"><stop offset="0" stop-color="#c8979e"/><stop offset="1" stop-color="#d9a9b0"/></linearGradient>
</defs>
<rect x="0" y="0" width="380" height="214" fill="url(#bgG)"/>
<g filter="url(#b8)">
<rect x="-12" y="46" width="86" height="156" fill="#84472f"/>
<rect x="10" y="85" width="22" height="70" fill="#985a44"/>
<rect x="-5" y="168" width="35" height="24" fill="#c9aca0"/>
<rect x="190" y="-12" width="66" height="70" fill="#a47258"/>
<rect x="246" y="48" width="66" height="175" fill="#a4715c"/>
<rect x="262" y="70" width="40" height="80" fill="#b3806a"/>
<rect x="318" y="0" width="20" height="214" fill="#e2c8b8"/>
<rect x="352" y="178" width="30" height="40" fill="#5e4c46"/>
<rect x="104" y="114" width="56" height="50" fill="#30241f"/>
<rect x="90" y="150" width="40" height="64" fill="#5b4238"/>
</g>
<g filter="url(#b1)">
<path d="M62 214 C66 198 72 186 86 178 C104 168 128 156 150 146 C156 143 160 141 163 140 L168 144 L228 146 L232 148 C246 152 262 156 280 160 C296 166 308 178 312 196 L314 214 Z" fill="#1f2b44"/>
<path d="M156 141 L236 146 C236 170 234 195 233 214 L164 214 C160 190 157 165 156 141 Z" fill="#141318"/>
<path d="M168 148 C180 158 192 163 201 164 C212 162 222 156 229 150 C228 166 222 182 212 198 C207 206 203 212 199 214 L197 214 C192 208 186 198 180 188 C173 174 169 160 168 148 Z" fill="url(#neckG)"/>
<path d="M140 150 C144 170 156 196 168 214 L140 214 C132 196 128 174 128 158 Z" fill="#2a3854"/>
<path d="M250 156 C246 178 238 198 228 214 L252 214 C262 196 268 178 268 162 Z" fill="#1f2b44"/>
</g>
<g filter="url(#b05)">
<ellipse cx="148" cy="112" rx="6.5" ry="15" fill="#c99296"/>
<ellipse cx="243" cy="106" rx="4.5" ry="13" fill="#c99296"/>
<path d="M149 74 C148 100 150 126 158 144 C166 160 180 170 196 171 C212 170 226 158 233 140 C240 122 242 98 241 74 C232 56 214 48 196 48 C176 48 158 56 149 74 Z" fill="url(#faceG)"/>
<path d="M143 95 C141 72 144 52 156 36 C168 22 186 15 204 15 C222 15 234 24 240 38 C245 50 245 68 243 90 C240 76 236 68 232 64 C224 54 210 50 196 50 C182 50 170 52 162 58 C156 64 152 76 150 90 C148 96 146 100 143 95 Z" fill="#3f2c26"/>
<path d="M158 38 C170 24 192 18 212 20 C200 24 186 30 176 42 C170 46 164 46 158 38 Z" fill="#57403a"/>
<path d="M196 50 C206 48 220 50 230 58 C222 56 210 54 198 56 Z" fill="#4a3530"/>
<path d="M156 90 C168 86 182 86 190 88 C191 96 190 108 186 112 C176 114 164 114 158 112 C154 106 154 96 156 90 Z" fill="#cfd8e6" fill-opacity="0.28" stroke="#55555c" stroke-width="1.2"/>
<path d="M204 88 C216 86 232 86 242 88 C242 98 240 108 236 112 C226 114 214 114 206 112 C202 106 202 96 204 88 Z" fill="#cfd8e6" fill-opacity="0.28" stroke="#55555c" stroke-width="1.2"/>
<path d="M190 90 C195 88 200 88 204 90" stroke="#55555c" stroke-width="1.2" fill="none"/>
<path d="M166 96 C172 94 180 94 186 96" stroke="#6aa0c8" stroke-width="1.6" fill="none" stroke-opacity="0.8"/>
<path d="M210 96 C218 94 226 94 232 96" stroke="#6aa0c8" stroke-width="1.6" fill="none" stroke-opacity="0.8"/>
<path d="M170 82 C176 80 184 80 190 82 M206 82 C214 80 224 80 232 83" stroke="#7a5555" stroke-width="1.4" fill="none"/>
<path d="M197 104 C195 114 193 120 196 124 C200 126 206 125 208 122" stroke="#b47c80" stroke-width="1.6" fill="none"/>
<path d="M181 139 C190 134 206 134 215 138 C210 147 190 148 181 139 Z" fill="#a45f6a"/>
<path d="M186 138 C194 136 204 136 211 138" stroke="#efdede" stroke-width="1.6" fill="none"/>
</g>
<rect x="0" y="194.5" width="135.5" height="19.5" fill="#2a2a2c" fill-opacity="0.85"/>
<rect x="3" y="205" width="2.2" height="4.5" fill="#f2f2f2"/>
<rect x="6.5" y="202" width="2.2" height="7.5" fill="#f2f2f2"/>
<rect x="10" y="199.5" width="2.2" height="10" fill="#f2f2f2"/>
<rect x="13.5" y="197" width="2.2" height="12.5" fill="#f2f2f2"/>
</svg>
<div class="t" style="left:1556.7px;top:632px;font-size:12.7px;line-height:12.7px;color:#e4ecf8;font-weight:400;font-family:'Liberation Sans';">Vsevolod Chikunov</div>
<div class="r" style="left:1526.5px;top:526px;width:1px;height:27px;background:#cfcfcf"></div>
<div class="r" style="left:1528.7px;top:526px;width:1px;height:27px;background:#cfcfcf"></div></div></body></html>
